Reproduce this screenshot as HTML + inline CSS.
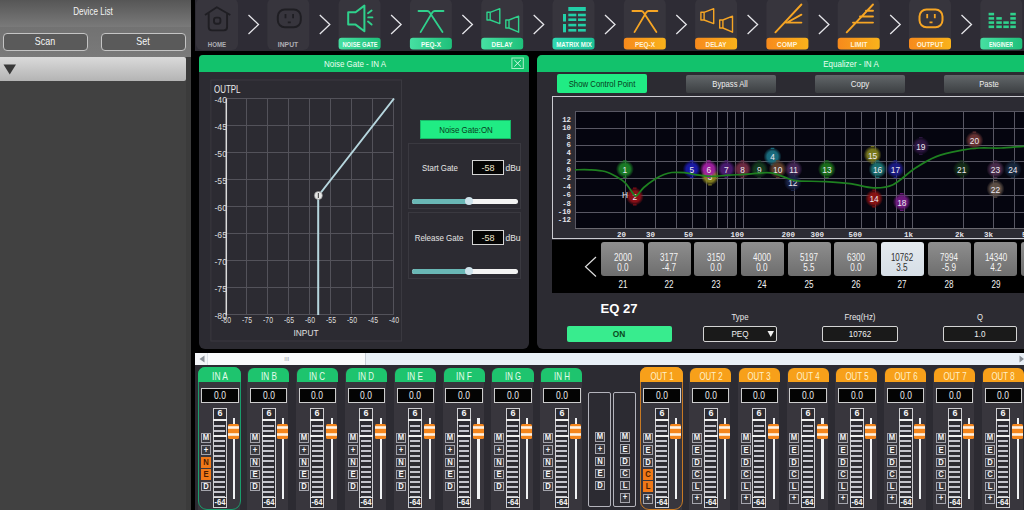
<!DOCTYPE html><html><head><meta charset="utf-8"><style>
*{margin:0;padding:0;box-sizing:border-box}
html,body{width:1024px;height:510px;overflow:hidden;background:#000}
body{position:relative;font-family:"Liberation Sans",sans-serif}
.a{position:absolute}
.t{white-space:nowrap}
svg{position:absolute;overflow:visible}
</style></head><body>

<div class="a" style="left:0.00px;top:0.00px;width:191.00px;height:27.00px;background:linear-gradient(#565656,#7a7a7a)"></div>
<div class="a" style="left:0.00px;top:27.00px;width:191.00px;height:30.00px;background:linear-gradient(#727272,#7a7a7a)"></div>
<div class="a t" style="left:-107.50px;top:4.79px;width:400px;height:14.42px;line-height:14.42px;font-size:10.3px;color:#f4f4f4;text-align:center;transform:scaleX(0.784);transform-origin:50% 50%;">Device List</div>
<div class="a" style="left:3.00px;top:32.80px;width:84.50px;height:18.00px;background:#5a5a5a;border:1.8px solid #c4c4c4;border-radius:4px"></div>
<div class="a t" style="left:-155.00px;top:34.45px;width:400px;height:14.70px;line-height:14.70px;font-size:10.5px;color:#f6f6f6;text-align:center;transform:scaleX(0.850);transform-origin:50% 50%;">Scan</div>
<div class="a" style="left:101.00px;top:32.80px;width:84.50px;height:18.00px;background:#5a5a5a;border:1.8px solid #c4c4c4;border-radius:4px"></div>
<div class="a t" style="left:-57.00px;top:34.45px;width:400px;height:14.70px;line-height:14.70px;font-size:10.5px;color:#f6f6f6;text-align:center;transform:scaleX(0.850);transform-origin:50% 50%;">Set</div>
<div class="a" style="left:0.00px;top:57.00px;width:191.00px;height:453.00px;background:#414141"></div>
<div class="a" style="left:0.00px;top:57.00px;width:186.00px;height:23.50px;background:linear-gradient(#dadada,#b4b4b4);border-radius:0 2px 2px 0"></div>
<svg style="left:0;top:0" width="191" height="100"><polygon points="3.5,64.5 16,64.5 9.75,74.5" fill="#383838"/></svg>
<div class="a" style="left:186.00px;top:57.00px;width:5.00px;height:453.00px;background:#3b3b3b"></div>
<div class="a" style="left:195.00px;top:0.00px;width:829.00px;height:50.60px;background:#2e2c35"></div>
<svg style="left:0;top:0" width="1024" height="52">
<rect x="196.00" y="-1.5" width="42" height="51.5" rx="6" fill="#37353d"/>
<polyline points="248.50,15 258.50,24.5 248.50,34" fill="none" stroke="#e6e6ea" stroke-width="1.3"/>
<path d="M205.0,15 L216.8,7.2 L230.3,15 M208.7,12.8 V27 Q208.7,30.4 212.0,30.4 H223.8 Q227.1,30.4 227.1,27 V12.8" fill="none" stroke="#1f1e23" stroke-width="1.9" stroke-linejoin="round"/>
<rect x="214.0" y="17.6" width="6.4" height="6.1" rx="2.2" fill="none" stroke="#1f1e23" stroke-width="1.9"/>
<rect x="267.30" y="-1.5" width="42" height="51.5" rx="6" fill="#37353d"/>
<polyline points="319.80,15 329.80,24.5 319.80,34" fill="none" stroke="#e6e6ea" stroke-width="1.3"/>
<rect x="277.8" y="9.5" width="23" height="17.8" rx="7" fill="none" stroke="#1f1e23" stroke-width="2"/>
<path d="M285.5,14 V18.2 M293.1,14 V18.2 M287.8,22.3 H290.8" fill="none" stroke="#1f1e23" stroke-width="1.8"/>
<rect x="338.60" y="-1.5" width="42" height="51.5" rx="6" fill="#37353d"/>
<polyline points="391.10,15 401.10,24.5 391.10,34" fill="none" stroke="#e6e6ea" stroke-width="1.3"/>
<path d="M348.20000000000005,12.3 H355.6 L364.40000000000003,5.6 V31.2 L355.6,24.6 H348.20000000000005 Z" fill="none" stroke="#2fd18c" stroke-width="2" stroke-linejoin="round"/>
<path d="M368.0,13.3 L371.6,10.6 M368.20000000000005,17.4 H372.40000000000003 M368.0,21.6 L371.6,24.6" fill="none" stroke="#2fd18c" stroke-width="1.9" stroke-linecap="round"/>
<defs><linearGradient id="g2" x1="0" x2="1" y1="0" y2="0"><stop offset="0" stop-color="#46e0a2"/><stop offset="1" stop-color="#1fc07a"/></linearGradient></defs>
<rect x="338.60" y="37.7" width="42" height="11.7" rx="3" fill="url(#g2)"/>
<rect x="409.90" y="-1.5" width="42" height="51.5" rx="6" fill="#37353d"/>
<polyline points="462.40,15 472.40,24.5 462.40,34" fill="none" stroke="#e6e6ea" stroke-width="1.3"/>
<path d="M418.5,11 H427.29999999999995 Q428.7,11 429.7,12.6 L442.5,32.1 M443.5,11 H434.7 Q433.29999999999995,11 432.29999999999995,12.6 L420.59999999999997,32.1" fill="none" stroke="#2fd18c" stroke-width="1.8" stroke-linecap="round"/>
<defs><linearGradient id="g3" x1="0" x2="1" y1="0" y2="0"><stop offset="0" stop-color="#46e0a2"/><stop offset="1" stop-color="#1fc07a"/></linearGradient></defs>
<rect x="409.90" y="37.7" width="42" height="11.7" rx="3" fill="url(#g3)"/>
<rect x="481.20" y="-1.5" width="42" height="51.5" rx="6" fill="#37353d"/>
<polyline points="533.70,15 543.70,24.5 533.70,34" fill="none" stroke="#e6e6ea" stroke-width="1.3"/>
<path d="M487.0,12.3 H490.2 V20 H487.0 Z M490.2,12.3 L499.8,8.7 V23.6 L490.2,20" fill="none" stroke="#2fd18c" stroke-width="1.4" stroke-linejoin="round"/>
<path d="M505.8,20 H509.0 V28 H505.8 Z M509.0,20 L518.6,16.2 V32.2 L509.0,28" fill="none" stroke="#2fd18c" stroke-width="1.4" stroke-linejoin="round"/>
<defs><linearGradient id="g4" x1="0" x2="1" y1="0" y2="0"><stop offset="0" stop-color="#46e0a2"/><stop offset="1" stop-color="#1fc07a"/></linearGradient></defs>
<rect x="481.20" y="37.7" width="42" height="11.7" rx="3" fill="url(#g4)"/>
<rect x="552.50" y="-1.5" width="42" height="51.5" rx="6" fill="#37353d"/>
<polyline points="605.00,15 615.00,24.5 605.00,34" fill="none" stroke="#e6e6ea" stroke-width="1.3"/>
<rect x="568.3" y="7" width="17.5" height="4" fill="#22cfa8"/>
<rect x="563.0" y="14" width="3" height="7.5" fill="#22cfa8"/><rect x="563.0" y="24" width="3" height="8.3" fill="#22cfa8"/>
<rect x="568.3" y="13.7" width="8" height="2.6" fill="#22cfa8"/><rect x="578.0" y="13.7" width="7.8" height="2.6" fill="#22cfa8"/>
<rect x="568.3" y="18.4" width="8" height="2.6" fill="#22cfa8"/><rect x="578.0" y="18.4" width="7.8" height="2.6" fill="#22cfa8"/>
<rect x="568.3" y="23.8" width="8" height="2.6" fill="#22cfa8"/><rect x="578.0" y="23.8" width="7.8" height="2.6" fill="#22cfa8"/>
<rect x="568.3" y="29" width="8" height="2.6" fill="#22cfa8"/><rect x="578.0" y="29" width="7.8" height="2.6" fill="#22cfa8"/>
<defs><linearGradient id="g5" x1="0" x2="1" y1="0" y2="0"><stop offset="0" stop-color="#2fd8b0"/><stop offset="1" stop-color="#1cc096"/></linearGradient></defs>
<rect x="552.50" y="37.7" width="42" height="11.7" rx="3" fill="url(#g5)"/>
<rect x="623.80" y="-1.5" width="42" height="51.5" rx="6" fill="#37353d"/>
<polyline points="676.30,15 686.30,24.5 676.30,34" fill="none" stroke="#e6e6ea" stroke-width="1.3"/>
<path d="M632.4,11 H641.1999999999999 Q642.5999999999999,11 643.5999999999999,12.6 L656.4,32.1 M657.4,11 H648.5999999999999 Q647.1999999999999,11 646.1999999999999,12.6 L634.5,32.1" fill="none" stroke="#f6a524" stroke-width="1.8" stroke-linecap="round"/>
<defs><linearGradient id="g6" x1="0" x2="1" y1="0" y2="0"><stop offset="0" stop-color="#f78a1c"/><stop offset="1" stop-color="#f9b21b"/></linearGradient></defs>
<rect x="623.80" y="37.7" width="42" height="11.7" rx="3" fill="url(#g6)"/>
<rect x="695.10" y="-1.5" width="42" height="51.5" rx="6" fill="#37353d"/>
<polyline points="747.60,15 757.60,24.5 747.60,34" fill="none" stroke="#e6e6ea" stroke-width="1.3"/>
<path d="M700.8999999999999,12.3 H704.0999999999999 V20 H700.8999999999999 Z M704.0999999999999,12.3 L713.6999999999999,8.7 V23.6 L704.0999999999999,20" fill="none" stroke="#f6a524" stroke-width="1.4" stroke-linejoin="round"/>
<path d="M719.6999999999999,20 H722.8999999999999 V28 H719.6999999999999 Z M722.8999999999999,20 L732.4999999999999,16.2 V32.2 L722.8999999999999,28" fill="none" stroke="#f6a524" stroke-width="1.4" stroke-linejoin="round"/>
<defs><linearGradient id="g7" x1="0" x2="1" y1="0" y2="0"><stop offset="0" stop-color="#f78a1c"/><stop offset="1" stop-color="#f9b21b"/></linearGradient></defs>
<rect x="695.10" y="37.7" width="42" height="11.7" rx="3" fill="url(#g7)"/>
<rect x="766.40" y="-1.5" width="42" height="51.5" rx="6" fill="#37353d"/>
<polyline points="818.90,15 828.90,24.5 818.90,34" fill="none" stroke="#e6e6ea" stroke-width="1.3"/>
<path d="M775.4,32.3 L801.4,4.5 M788.0,22 L801.4,14.7 M786.0,22.6 H801.4" fill="none" stroke="#f6a524" stroke-width="1.9" stroke-linecap="round"/>
<defs><linearGradient id="g8" x1="0" x2="1" y1="0" y2="0"><stop offset="0" stop-color="#f78a1c"/><stop offset="1" stop-color="#f9b21b"/></linearGradient></defs>
<rect x="766.40" y="37.7" width="42" height="11.7" rx="3" fill="url(#g8)"/>
<rect x="837.70" y="-1.5" width="42" height="51.5" rx="6" fill="#37353d"/>
<polyline points="890.20,15 900.20,24.5 890.20,34" fill="none" stroke="#e6e6ea" stroke-width="1.3"/>
<path d="M846.6999999999999,32.3 L872.9999999999999,4.5 M865.9999999999999,10.7 H872.9999999999999 M859.9999999999999,16.5 H872.9999999999999 M852.9999999999999,22.6 H872.9999999999999" fill="none" stroke="#f6a524" stroke-width="1.9" stroke-linecap="round"/>
<defs><linearGradient id="g9" x1="0" x2="1" y1="0" y2="0"><stop offset="0" stop-color="#f78a1c"/><stop offset="1" stop-color="#f9b21b"/></linearGradient></defs>
<rect x="837.70" y="37.7" width="42" height="11.7" rx="3" fill="url(#g9)"/>
<rect x="909.00" y="-1.5" width="42" height="51.5" rx="6" fill="#37353d"/>
<polyline points="961.50,15 971.50,24.5 961.50,34" fill="none" stroke="#e6e6ea" stroke-width="1.3"/>
<rect x="919.5" y="9.5" width="23" height="17.8" rx="7" fill="none" stroke="#f6a524" stroke-width="2"/>
<path d="M927.2,14 V18.2 M934.8,14 V18.2 M929.5,22.3 H932.5" fill="none" stroke="#f6a524" stroke-width="1.8"/>
<defs><linearGradient id="g10" x1="0" x2="1" y1="0" y2="0"><stop offset="0" stop-color="#f78a1c"/><stop offset="1" stop-color="#f9b21b"/></linearGradient></defs>
<rect x="909.00" y="37.7" width="42" height="11.7" rx="3" fill="url(#g10)"/>
<rect x="980.30" y="-1.5" width="42" height="51.5" rx="6" fill="#37353d"/>
<rect x="988.6" y="12.8" width="5.5" height="2.6" fill="#2fd18c"/>
<rect x="988.6" y="17.1" width="5.5" height="2.6" fill="#2fd18c"/>
<rect x="988.6" y="21.3" width="5.5" height="2.6" fill="#2fd18c"/>
<rect x="988.6" y="25.5" width="5.5" height="2.6" fill="#2fd18c"/>
<rect x="996.3" y="17.1" width="5.5" height="2.6" fill="#2fd18c"/>
<rect x="996.3" y="21.3" width="5.5" height="2.6" fill="#2fd18c"/>
<rect x="996.3" y="25.5" width="5.5" height="2.6" fill="#2fd18c"/>
<rect x="1003.3" y="21.3" width="5.5" height="2.6" fill="#2fd18c"/>
<rect x="1003.3" y="25.5" width="5.5" height="2.6" fill="#2fd18c"/>
<rect x="1010.3" y="12.8" width="5.5" height="2.6" fill="#2fd18c"/>
<rect x="1010.3" y="17.1" width="5.5" height="2.6" fill="#2fd18c"/>
<rect x="1010.3" y="21.3" width="5.5" height="2.6" fill="#2fd18c"/>
<rect x="1010.3" y="25.5" width="5.5" height="2.6" fill="#2fd18c"/>
<defs><linearGradient id="g11" x1="0" x2="1" y1="0" y2="0"><stop offset="0" stop-color="#46e0a2"/><stop offset="1" stop-color="#1fc07a"/></linearGradient></defs>
<rect x="980.30" y="37.7" width="42" height="11.7" rx="3" fill="url(#g11)"/>
</svg>
<div class="a t" style="left:17.00px;top:39.60px;width:400px;height:9.80px;line-height:9.80px;font-size:7px;color:#aeaeb4;text-align:center;font-weight:bold;transform:scaleX(0.876);transform-origin:50% 50%;">HOME</div>
<div class="a t" style="left:88.30px;top:39.60px;width:400px;height:9.80px;line-height:9.80px;font-size:7px;color:#aeaeb4;text-align:center;font-weight:bold;transform:scaleX(0.967);transform-origin:50% 50%;">INPUT</div>
<div class="a t" style="left:159.60px;top:39.60px;width:400px;height:9.80px;line-height:9.80px;font-size:7px;color:#effff6;text-align:center;font-weight:bold;transform:scaleX(0.825);transform-origin:50% 50%;">NOISE GATE</div>
<div class="a t" style="left:230.90px;top:39.60px;width:400px;height:9.80px;line-height:9.80px;font-size:7px;color:#effff6;text-align:center;font-weight:bold;transform:scaleX(0.914);transform-origin:50% 50%;">PEQ-X</div>
<div class="a t" style="left:302.20px;top:39.60px;width:400px;height:9.80px;line-height:9.80px;font-size:7px;color:#effff6;text-align:center;font-weight:bold;transform:scaleX(0.901);transform-origin:50% 50%;">DELAY</div>
<div class="a t" style="left:373.50px;top:39.60px;width:400px;height:9.80px;line-height:9.80px;font-size:7px;color:#effff6;text-align:center;font-weight:bold;transform:scaleX(0.870);transform-origin:50% 50%;">MATRIX MIX</div>
<div class="a t" style="left:444.80px;top:39.60px;width:400px;height:9.80px;line-height:9.80px;font-size:7px;color:#fff2d8;text-align:center;font-weight:bold;transform:scaleX(0.914);transform-origin:50% 50%;">PEQ-X</div>
<div class="a t" style="left:516.10px;top:39.60px;width:400px;height:9.80px;line-height:9.80px;font-size:7px;color:#fff2d8;text-align:center;font-weight:bold;transform:scaleX(0.901);transform-origin:50% 50%;">DELAY</div>
<div class="a t" style="left:587.40px;top:39.60px;width:400px;height:9.80px;line-height:9.80px;font-size:7px;color:#fff2d8;text-align:center;font-weight:bold;transform:scaleX(0.976);transform-origin:50% 50%;">COMP</div>
<div class="a t" style="left:658.70px;top:39.60px;width:400px;height:9.80px;line-height:9.80px;font-size:7px;color:#fff2d8;text-align:center;font-weight:bold;transform:scaleX(0.930);transform-origin:50% 50%;">LIMIT</div>
<div class="a t" style="left:730.00px;top:39.60px;width:400px;height:9.80px;line-height:9.80px;font-size:7px;color:#fff2d8;text-align:center;font-weight:bold;transform:scaleX(0.928);transform-origin:50% 50%;">OUTPUT</div>
<div class="a t" style="left:801.30px;top:39.60px;width:400px;height:9.80px;line-height:9.80px;font-size:7px;color:#effff6;text-align:center;font-weight:bold;transform:scaleX(0.749);transform-origin:50% 50%;">ENGINER</div>
<div class="a" style="left:198.80px;top:54.80px;width:330.50px;height:294.20px;background:#2c2b32;border-radius:4px 4px 6px 6px;overflow:hidden"></div>
<div class="a" style="left:198.80px;top:54.80px;width:330.50px;height:17.20px;background:#12c26c;border-radius:4px 4px 0 0"></div>
<div class="a t" style="left:155.00px;top:56.74px;width:400px;height:13.72px;line-height:13.72px;font-size:9.8px;color:#eafff2;text-align:center;transform:scaleX(0.813);transform-origin:50% 50%;">Noise Gate - IN A</div>
<svg style="left:0;top:0" width="1024" height="350">
<rect x="511.9" y="58" width="11.4" height="10.5" fill="none" stroke="#a8f0c8" stroke-width="1"/>
<path d="M514.3,60 L520.9,66.5 M520.9,60 L514.3,66.5" stroke="#d8fbe8" stroke-width="1"/>
<rect x="210.9" y="80" width="190.6" height="261" fill="none" stroke="#3a3940" stroke-width="1"/>
<path d="M246.5,99 V315 M267.5,99 V315 M288.5,99 V315 M309.5,99 V315 M330.5,99 V315 M351.5,99 V315 M372.5,99 V315 M393.5,99 V315 M226,98.5 H394 M226,125.5 H394 M226,152.5 H394 M226,179.5 H394 M226,206.5 H394 M226,233.5 H394 M226,260.5 H394 M226,287.5 H394 M226,314.5 H394" stroke="#53525a" stroke-width="1" fill="none"/>
<path d="M226.3,99 V315.5" stroke="#dcdcdc" stroke-width="1.5"/>
<path d="M318.2,315 V196 L394,98.5" stroke="#b6d6de" stroke-width="2" fill="none"/>
<circle cx="318.4" cy="195.5" r="4" fill="#e6e6e6" stroke="#888" stroke-width="0.6"/>
<path d="M318.4,193 V198" stroke="#555" stroke-width="1.2"/>
</svg>
<div class="a t" style="left:213.80px;top:82.45px;width:400px;height:14.70px;line-height:14.70px;font-size:10.5px;color:#ececec;text-align:left;transform:scaleX(0.757);transform-origin:0% 50%;">OUTPL</div>
<div class="a t" style="left:-173.50px;top:92.64px;width:400px;height:13.72px;line-height:13.72px;font-size:9.8px;color:#dedede;text-align:right;transform:scaleX(0.883);transform-origin:100% 50%;">-40</div>
<div class="a t" style="left:-173.50px;top:119.64px;width:400px;height:13.72px;line-height:13.72px;font-size:9.8px;color:#dedede;text-align:right;transform:scaleX(0.883);transform-origin:100% 50%;">-45</div>
<div class="a t" style="left:-173.50px;top:146.64px;width:400px;height:13.72px;line-height:13.72px;font-size:9.8px;color:#dedede;text-align:right;transform:scaleX(0.883);transform-origin:100% 50%;">-50</div>
<div class="a t" style="left:-173.50px;top:173.64px;width:400px;height:13.72px;line-height:13.72px;font-size:9.8px;color:#dedede;text-align:right;transform:scaleX(0.883);transform-origin:100% 50%;">-55</div>
<div class="a t" style="left:-173.50px;top:200.64px;width:400px;height:13.72px;line-height:13.72px;font-size:9.8px;color:#dedede;text-align:right;transform:scaleX(0.883);transform-origin:100% 50%;">-60</div>
<div class="a t" style="left:-173.50px;top:227.64px;width:400px;height:13.72px;line-height:13.72px;font-size:9.8px;color:#dedede;text-align:right;transform:scaleX(0.883);transform-origin:100% 50%;">-65</div>
<div class="a t" style="left:-173.50px;top:254.64px;width:400px;height:13.72px;line-height:13.72px;font-size:9.8px;color:#dedede;text-align:right;transform:scaleX(0.883);transform-origin:100% 50%;">-70</div>
<div class="a t" style="left:-173.50px;top:281.64px;width:400px;height:13.72px;line-height:13.72px;font-size:9.8px;color:#dedede;text-align:right;transform:scaleX(0.883);transform-origin:100% 50%;">-75</div>
<div class="a t" style="left:-173.50px;top:308.64px;width:400px;height:13.72px;line-height:13.72px;font-size:9.8px;color:#dedede;text-align:right;transform:scaleX(0.883);transform-origin:100% 50%;">-80</div>
<div class="a t" style="left:26.00px;top:313.14px;width:400px;height:13.72px;line-height:13.72px;font-size:9.8px;color:#dedede;text-align:center;transform:scaleX(0.706);transform-origin:50% 50%;">-80</div>
<div class="a t" style="left:47.00px;top:313.14px;width:400px;height:13.72px;line-height:13.72px;font-size:9.8px;color:#dedede;text-align:center;transform:scaleX(0.706);transform-origin:50% 50%;">-75</div>
<div class="a t" style="left:68.00px;top:313.14px;width:400px;height:13.72px;line-height:13.72px;font-size:9.8px;color:#dedede;text-align:center;transform:scaleX(0.706);transform-origin:50% 50%;">-70</div>
<div class="a t" style="left:89.00px;top:313.14px;width:400px;height:13.72px;line-height:13.72px;font-size:9.8px;color:#dedede;text-align:center;transform:scaleX(0.706);transform-origin:50% 50%;">-65</div>
<div class="a t" style="left:110.00px;top:313.14px;width:400px;height:13.72px;line-height:13.72px;font-size:9.8px;color:#dedede;text-align:center;transform:scaleX(0.706);transform-origin:50% 50%;">-60</div>
<div class="a t" style="left:131.00px;top:313.14px;width:400px;height:13.72px;line-height:13.72px;font-size:9.8px;color:#dedede;text-align:center;transform:scaleX(0.706);transform-origin:50% 50%;">-55</div>
<div class="a t" style="left:152.00px;top:313.14px;width:400px;height:13.72px;line-height:13.72px;font-size:9.8px;color:#dedede;text-align:center;transform:scaleX(0.706);transform-origin:50% 50%;">-50</div>
<div class="a t" style="left:173.00px;top:313.14px;width:400px;height:13.72px;line-height:13.72px;font-size:9.8px;color:#dedede;text-align:center;transform:scaleX(0.706);transform-origin:50% 50%;">-45</div>
<div class="a t" style="left:194.00px;top:313.14px;width:400px;height:13.72px;line-height:13.72px;font-size:9.8px;color:#dedede;text-align:center;transform:scaleX(0.706);transform-origin:50% 50%;">-40</div>
<div class="a t" style="left:106.00px;top:325.64px;width:400px;height:13.72px;line-height:13.72px;font-size:9.8px;color:#e0e0e0;text-align:center;transform:scaleX(0.850);transform-origin:50% 50%;">INPUT</div>
<div class="a" style="left:420.20px;top:119.80px;width:91.00px;height:19.20px;background:#20ec84;border:1px solid #18b868"></div>
<div class="a t" style="left:265.70px;top:122.54px;width:400px;height:13.72px;line-height:13.72px;font-size:9.8px;color:#07401e;text-align:center;transform:scaleX(0.807);transform-origin:50% 50%;">Noise Gate:ON</div>
<div class="a" style="left:408.20px;top:143.00px;width:113.00px;height:65.50px;border:1px solid #3a3940"></div>
<div class="a t" style="left:239.90px;top:160.74px;width:400px;height:13.72px;line-height:13.72px;font-size:9.8px;color:#e6e6e6;text-align:center;transform:scaleX(0.802);transform-origin:50% 50%;">Start Gate</div>
<div class="a" style="left:472.00px;top:160.10px;width:32.00px;height:15.00px;background:#050505;border:1px solid #d4d4d4"></div>
<div class="a t" style="left:288.00px;top:160.74px;width:400px;height:13.72px;line-height:13.72px;font-size:9.8px;color:#f0e8d0;text-align:center;transform:scaleX(0.918);transform-origin:50% 50%;">-58</div>
<div class="a t" style="left:312.50px;top:160.74px;width:400px;height:13.72px;line-height:13.72px;font-size:9.8px;color:#e6e6e6;text-align:center;transform:scaleX(0.860);transform-origin:50% 50%;">dBu</div>
<div class="a" style="left:411.80px;top:198.70px;width:106.00px;height:5.20px;background:#f4f4f4;border-radius:3px"></div>
<div class="a" style="left:411.80px;top:198.70px;width:58.00px;height:5.20px;background:#69b7b5;border-radius:3px 0 0 3px"></div>
<div class="a" style="left:465.30px;top:197.30px;width:8.00px;height:8.00px;background:#cfe3ec;border-radius:50%"></div>
<div class="a" style="left:408.20px;top:212.00px;width:113.00px;height:66.70px;border:1px solid #3a3940"></div>
<div class="a t" style="left:239.35px;top:230.74px;width:400px;height:13.72px;line-height:13.72px;font-size:9.8px;color:#e6e6e6;text-align:center;transform:scaleX(0.813);transform-origin:50% 50%;">Release Gate</div>
<div class="a" style="left:472.00px;top:230.10px;width:32.00px;height:15.00px;background:#050505;border:1px solid #d4d4d4"></div>
<div class="a t" style="left:288.00px;top:230.74px;width:400px;height:13.72px;line-height:13.72px;font-size:9.8px;color:#f0e8d0;text-align:center;transform:scaleX(0.918);transform-origin:50% 50%;">-58</div>
<div class="a t" style="left:312.50px;top:230.74px;width:400px;height:13.72px;line-height:13.72px;font-size:9.8px;color:#e6e6e6;text-align:center;transform:scaleX(0.860);transform-origin:50% 50%;">dBu</div>
<div class="a" style="left:411.80px;top:268.70px;width:106.00px;height:5.20px;background:#f4f4f4;border-radius:3px"></div>
<div class="a" style="left:411.80px;top:268.70px;width:58.00px;height:5.20px;background:#69b7b5;border-radius:3px 0 0 3px"></div>
<div class="a" style="left:465.30px;top:267.30px;width:8.00px;height:8.00px;background:#cfe3ec;border-radius:50%"></div>
<div class="a" style="left:537.00px;top:54.80px;width:500.00px;height:294.20px;background:#2c2b32;border-radius:5px 0 0 6px"></div>
<div class="a" style="left:537.00px;top:54.80px;width:500.00px;height:17.20px;background:#12c26c;border-radius:5px 0 0 0"></div>
<div class="a t" style="left:650.70px;top:56.74px;width:400px;height:13.72px;line-height:13.72px;font-size:9.8px;color:#eafff2;text-align:center;transform:scaleX(0.814);transform-origin:50% 50%;">Equalizer - IN A</div>
<div class="a" style="left:556.50px;top:74.00px;width:90.00px;height:19.00px;background:#20ec84;border-radius:2px"></div>
<div class="a t" style="left:401.50px;top:76.64px;width:400px;height:13.72px;line-height:13.72px;font-size:9.8px;color:#07401e;text-align:center;transform:scaleX(0.795);transform-origin:50% 50%;">Show Control Point</div>
<div class="a" style="left:686.00px;top:74.50px;width:90.00px;height:18.50px;background:linear-gradient(#62676a,#3c3f42);border-radius:2px"></div>
<div class="a t" style="left:530.30px;top:76.64px;width:400px;height:13.72px;line-height:13.72px;font-size:9.8px;color:#eeeeee;text-align:center;transform:scaleX(0.785);transform-origin:50% 50%;">Bypass All</div>
<div class="a" style="left:814.60px;top:74.50px;width:90.00px;height:18.50px;background:linear-gradient(#62676a,#3c3f42);border-radius:2px"></div>
<div class="a t" style="left:659.70px;top:76.64px;width:400px;height:13.72px;line-height:13.72px;font-size:9.8px;color:#eeeeee;text-align:center;transform:scaleX(0.813);transform-origin:50% 50%;">Copy</div>
<div class="a" style="left:944.00px;top:74.50px;width:90.00px;height:18.50px;background:linear-gradient(#62676a,#3c3f42);border-radius:2px"></div>
<div class="a t" style="left:788.50px;top:76.64px;width:400px;height:13.72px;line-height:13.72px;font-size:9.8px;color:#eeeeee;text-align:center;transform:scaleX(0.782);transform-origin:50% 50%;">Paste</div>
<div class="a" style="left:552.30px;top:96.30px;width:480.00px;height:142.50px;background:#2c2b33;border:1.5px solid #cacad0;border-right:none"></div>
<svg style="left:0;top:0" width="1024" height="350">
<rect x="575" y="111" width="460" height="117.5" fill="#05050f"/>
<path d="M625.5,111 V228.5 M655.5,111 V228.5 M676.5,111 V228.5 M692.5,111 V228.5 M706.5,111 V228.5 M717.5,111 V228.5 M727.5,111 V228.5 M735.5,111 V228.5 M743.5,111 V228.5 M794.5,111 V228.5 M824.5,111 V228.5 M845.5,111 V228.5 M861.5,111 V228.5 M875.5,111 V228.5 M886.5,111 V228.5 M896.5,111 V228.5 M904.5,111 V228.5 M912.5,111 V228.5 M963.5,111 V228.5 M993.5,111 V228.5 M1014.5,111 V228.5 M575,111.5 H1024 M575,128.5 H1024 M575,145.5 H1024 M575,161.5 H1024 M575,178.5 H1024 M575,195.5 H1024 M575,212.5 H1024 M575.5,111 V228.5" stroke="#585763" stroke-width="1" fill="none"/>
<path d="M575,228.5 H1024" stroke="#6a6970" stroke-width="1" fill="none"/>
<defs>
<radialGradient id="cp1"><stop offset="0" stop-color="#1a7e26"/><stop offset="0.6" stop-color="#1a7e26" stop-opacity="0.95"/><stop offset="1" stop-color="#1a7e26" stop-opacity="0"/></radialGradient>
<radialGradient id="cp2"><stop offset="0" stop-color="#8e1018"/><stop offset="0.6" stop-color="#8e1018" stop-opacity="0.95"/><stop offset="1" stop-color="#8e1018" stop-opacity="0"/></radialGradient>
<radialGradient id="cp3"><stop offset="0" stop-color="#8a8420"/><stop offset="0.6" stop-color="#8a8420" stop-opacity="0.95"/><stop offset="1" stop-color="#8a8420" stop-opacity="0"/></radialGradient>
<radialGradient id="cp4"><stop offset="0" stop-color="#1a6e80"/><stop offset="0.6" stop-color="#1a6e80" stop-opacity="0.95"/><stop offset="1" stop-color="#1a6e80" stop-opacity="0"/></radialGradient>
<radialGradient id="cp5"><stop offset="0" stop-color="#1a1aa8"/><stop offset="0.6" stop-color="#1a1aa8" stop-opacity="0.95"/><stop offset="1" stop-color="#1a1aa8" stop-opacity="0"/></radialGradient>
<radialGradient id="cp6"><stop offset="0" stop-color="#a020a0"/><stop offset="0.6" stop-color="#a020a0" stop-opacity="0.95"/><stop offset="1" stop-color="#a020a0" stop-opacity="0"/></radialGradient>
<radialGradient id="cp7"><stop offset="0" stop-color="#4a1a70"/><stop offset="0.6" stop-color="#4a1a70" stop-opacity="0.95"/><stop offset="1" stop-color="#4a1a70" stop-opacity="0"/></radialGradient>
<radialGradient id="cp8"><stop offset="0" stop-color="#6e2a42"/><stop offset="0.6" stop-color="#6e2a42" stop-opacity="0.95"/><stop offset="1" stop-color="#6e2a42" stop-opacity="0"/></radialGradient>
<radialGradient id="cp9"><stop offset="0" stop-color="#143a1e"/><stop offset="0.6" stop-color="#143a1e" stop-opacity="0.95"/><stop offset="1" stop-color="#143a1e" stop-opacity="0"/></radialGradient>
<radialGradient id="cp10"><stop offset="0" stop-color="#5e3e2a"/><stop offset="0.6" stop-color="#5e3e2a" stop-opacity="0.95"/><stop offset="1" stop-color="#5e3e2a" stop-opacity="0"/></radialGradient>
<radialGradient id="cp11"><stop offset="0" stop-color="#442656"/><stop offset="0.6" stop-color="#442656" stop-opacity="0.95"/><stop offset="1" stop-color="#442656" stop-opacity="0"/></radialGradient>
<radialGradient id="cp12"><stop offset="0" stop-color="#1a2448"/><stop offset="0.6" stop-color="#1a2448" stop-opacity="0.95"/><stop offset="1" stop-color="#1a2448" stop-opacity="0"/></radialGradient>
<radialGradient id="cp13"><stop offset="0" stop-color="#1a701a"/><stop offset="0.6" stop-color="#1a701a" stop-opacity="0.95"/><stop offset="1" stop-color="#1a701a" stop-opacity="0"/></radialGradient>
<radialGradient id="cp14"><stop offset="0" stop-color="#8a1212"/><stop offset="0.6" stop-color="#8a1212" stop-opacity="0.95"/><stop offset="1" stop-color="#8a1212" stop-opacity="0"/></radialGradient>
<radialGradient id="cp15"><stop offset="0" stop-color="#7a7a1c"/><stop offset="0.6" stop-color="#7a7a1c" stop-opacity="0.95"/><stop offset="1" stop-color="#7a7a1c" stop-opacity="0"/></radialGradient>
<radialGradient id="cp16"><stop offset="0" stop-color="#1a7070"/><stop offset="0.6" stop-color="#1a7070" stop-opacity="0.95"/><stop offset="1" stop-color="#1a7070" stop-opacity="0"/></radialGradient>
<radialGradient id="cp17"><stop offset="0" stop-color="#1a1a84"/><stop offset="0.6" stop-color="#1a1a84" stop-opacity="0.95"/><stop offset="1" stop-color="#1a1a84" stop-opacity="0"/></radialGradient>
<radialGradient id="cp18"><stop offset="0" stop-color="#701a80"/><stop offset="0.6" stop-color="#701a80" stop-opacity="0.95"/><stop offset="1" stop-color="#701a80" stop-opacity="0"/></radialGradient>
<radialGradient id="cp19"><stop offset="0" stop-color="#2e1642"/><stop offset="0.6" stop-color="#2e1642" stop-opacity="0.95"/><stop offset="1" stop-color="#2e1642" stop-opacity="0"/></radialGradient>
<radialGradient id="cp20"><stop offset="0" stop-color="#6a3434"/><stop offset="0.6" stop-color="#6a3434" stop-opacity="0.95"/><stop offset="1" stop-color="#6a3434" stop-opacity="0"/></radialGradient>
<radialGradient id="cp21"><stop offset="0" stop-color="#142e18"/><stop offset="0.6" stop-color="#142e18" stop-opacity="0.95"/><stop offset="1" stop-color="#142e18" stop-opacity="0"/></radialGradient>
<radialGradient id="cp22"><stop offset="0" stop-color="#5e5046"/><stop offset="0.6" stop-color="#5e5046" stop-opacity="0.95"/><stop offset="1" stop-color="#5e5046" stop-opacity="0"/></radialGradient>
<radialGradient id="cp23"><stop offset="0" stop-color="#4a2c4c"/><stop offset="0.6" stop-color="#4a2c4c" stop-opacity="0.95"/><stop offset="1" stop-color="#4a2c4c" stop-opacity="0"/></radialGradient>
<radialGradient id="cp24"><stop offset="0" stop-color="#16283e"/><stop offset="0.6" stop-color="#16283e" stop-opacity="0.95"/><stop offset="1" stop-color="#16283e" stop-opacity="0"/></radialGradient>
</defs>
<circle cx="710" cy="176.5" r="9" fill="url(#cp3)"/>
<path d="M708.2,168.2 H711.8 M708.2,184.8 H711.8" stroke="#8a8420" stroke-width="1.2" opacity="0.9"/>
<text x="710" y="180.26" font-size="9.5" font-family="Liberation Sans" fill="#ece8f0" text-anchor="middle" textLength="4.65" lengthAdjust="spacingAndGlyphs">3</text>
<circle cx="624.9" cy="169.1" r="9" fill="url(#cp1)"/>
<path d="M623.1,160.79999999999998 H626.6999999999999 M623.1,177.4 H626.6999999999999" stroke="#1a7e26" stroke-width="1.2" opacity="0.9"/>
<text x="624.9" y="172.86" font-size="9.5" font-family="Liberation Sans" fill="#ece8f0" text-anchor="middle" textLength="4.65" lengthAdjust="spacingAndGlyphs">1</text>
<circle cx="634.8" cy="196.5" r="9" fill="url(#cp2)"/>
<path d="M633.0,188.2 H636.5999999999999 M633.0,204.8 H636.5999999999999" stroke="#8e1018" stroke-width="1.2" opacity="0.9"/>
<text x="634.8" y="200.26" font-size="9.5" font-family="Liberation Sans" fill="#ece8f0" text-anchor="middle" textLength="4.65" lengthAdjust="spacingAndGlyphs">2</text>
<circle cx="691.7" cy="169.2" r="9" fill="url(#cp5)"/>
<path d="M689.9000000000001,160.89999999999998 H693.5 M689.9000000000001,177.5 H693.5" stroke="#1a1aa8" stroke-width="1.2" opacity="0.9"/>
<text x="691.7" y="172.96" font-size="9.5" font-family="Liberation Sans" fill="#ece8f0" text-anchor="middle" textLength="4.65" lengthAdjust="spacingAndGlyphs">5</text>
<circle cx="708.8" cy="169.2" r="9" fill="url(#cp6)"/>
<path d="M707.0,160.89999999999998 H710.5999999999999 M707.0,177.5 H710.5999999999999" stroke="#a020a0" stroke-width="1.2" opacity="0.9"/>
<text x="708.8" y="172.96" font-size="9.5" font-family="Liberation Sans" fill="#ece8f0" text-anchor="middle" textLength="4.65" lengthAdjust="spacingAndGlyphs">6</text>
<circle cx="726.4" cy="169.2" r="9" fill="url(#cp7)"/>
<path d="M724.6,160.89999999999998 H728.1999999999999 M724.6,177.5 H728.1999999999999" stroke="#4a1a70" stroke-width="1.2" opacity="0.9"/>
<text x="726.4" y="172.96" font-size="9.5" font-family="Liberation Sans" fill="#ece8f0" text-anchor="middle" textLength="4.65" lengthAdjust="spacingAndGlyphs">7</text>
<circle cx="742.5" cy="169.2" r="9" fill="url(#cp8)"/>
<path d="M740.7,160.89999999999998 H744.3 M740.7,177.5 H744.3" stroke="#6e2a42" stroke-width="1.2" opacity="0.9"/>
<text x="742.5" y="172.96" font-size="9.5" font-family="Liberation Sans" fill="#ece8f0" text-anchor="middle" textLength="4.65" lengthAdjust="spacingAndGlyphs">8</text>
<circle cx="759.2" cy="169.2" r="9" fill="url(#cp9)"/>
<path d="M757.4000000000001,160.89999999999998 H761.0 M757.4000000000001,177.5 H761.0" stroke="#143a1e" stroke-width="1.2" opacity="0.9"/>
<text x="759.2" y="172.96" font-size="9.5" font-family="Liberation Sans" fill="#ece8f0" text-anchor="middle" textLength="4.65" lengthAdjust="spacingAndGlyphs">9</text>
<circle cx="772.5" cy="156.6" r="9" fill="url(#cp4)"/>
<path d="M770.7,148.29999999999998 H774.3 M770.7,164.9 H774.3" stroke="#1a6e80" stroke-width="1.2" opacity="0.9"/>
<text x="772.5" y="160.36" font-size="9.5" font-family="Liberation Sans" fill="#ece8f0" text-anchor="middle" textLength="4.65" lengthAdjust="spacingAndGlyphs">4</text>
<circle cx="777.7" cy="169.2" r="9" fill="url(#cp10)"/>
<path d="M775.9000000000001,160.89999999999998 H779.5 M775.9000000000001,177.5 H779.5" stroke="#5e3e2a" stroke-width="1.2" opacity="0.9"/>
<text x="777.7" y="172.96" font-size="9.5" font-family="Liberation Sans" fill="#ece8f0" text-anchor="middle" textLength="9.30" lengthAdjust="spacingAndGlyphs">10</text>
<circle cx="793.5" cy="169.2" r="9" fill="url(#cp11)"/>
<path d="M791.7,160.89999999999998 H795.3 M791.7,177.5 H795.3" stroke="#442656" stroke-width="1.2" opacity="0.9"/>
<text x="793.5" y="172.96" font-size="9.5" font-family="Liberation Sans" fill="#ece8f0" text-anchor="middle" textLength="8.68" lengthAdjust="spacingAndGlyphs">11</text>
<circle cx="792.8" cy="182.2" r="9" fill="url(#cp12)"/>
<path d="M791.0,173.89999999999998 H794.5999999999999 M791.0,190.5 H794.5999999999999" stroke="#1a2448" stroke-width="1.2" opacity="0.9"/>
<text x="792.8" y="185.96" font-size="9.5" font-family="Liberation Sans" fill="#ece8f0" text-anchor="middle" textLength="9.30" lengthAdjust="spacingAndGlyphs">12</text>
<circle cx="826.9" cy="169.2" r="9" fill="url(#cp13)"/>
<path d="M825.1,160.89999999999998 H828.6999999999999 M825.1,177.5 H828.6999999999999" stroke="#1a701a" stroke-width="1.2" opacity="0.9"/>
<text x="826.9" y="172.96" font-size="9.5" font-family="Liberation Sans" fill="#ece8f0" text-anchor="middle" textLength="9.30" lengthAdjust="spacingAndGlyphs">13</text>
<circle cx="872.6" cy="154.8" r="9" fill="url(#cp15)"/>
<path d="M870.8000000000001,146.5 H874.4 M870.8000000000001,163.10000000000002 H874.4" stroke="#7a7a1c" stroke-width="1.2" opacity="0.9"/>
<text x="872.6" y="158.56" font-size="9.5" font-family="Liberation Sans" fill="#ece8f0" text-anchor="middle" textLength="9.30" lengthAdjust="spacingAndGlyphs">15</text>
<circle cx="877.6" cy="169.2" r="9" fill="url(#cp16)"/>
<path d="M875.8000000000001,160.89999999999998 H879.4 M875.8000000000001,177.5 H879.4" stroke="#1a7070" stroke-width="1.2" opacity="0.9"/>
<text x="877.6" y="172.96" font-size="9.5" font-family="Liberation Sans" fill="#ece8f0" text-anchor="middle" textLength="9.30" lengthAdjust="spacingAndGlyphs">16</text>
<circle cx="895.4" cy="169.2" r="9" fill="url(#cp17)"/>
<path d="M893.6,160.89999999999998 H897.1999999999999 M893.6,177.5 H897.1999999999999" stroke="#1a1a84" stroke-width="1.2" opacity="0.9"/>
<text x="895.4" y="172.96" font-size="9.5" font-family="Liberation Sans" fill="#ece8f0" text-anchor="middle" textLength="9.30" lengthAdjust="spacingAndGlyphs">17</text>
<circle cx="874.1" cy="198.5" r="9" fill="url(#cp14)"/>
<path d="M872.3000000000001,190.2 H875.9 M872.3000000000001,206.8 H875.9" stroke="#8a1212" stroke-width="1.2" opacity="0.9"/>
<text x="874.1" y="202.26" font-size="9.5" font-family="Liberation Sans" fill="#ece8f0" text-anchor="middle" textLength="9.30" lengthAdjust="spacingAndGlyphs">14</text>
<circle cx="901.8" cy="202" r="9" fill="url(#cp18)"/>
<path d="M900.0,193.7 H903.5999999999999 M900.0,210.3 H903.5999999999999" stroke="#701a80" stroke-width="1.2" opacity="0.9"/>
<text x="901.8" y="205.76" font-size="9.5" font-family="Liberation Sans" fill="#ece8f0" text-anchor="middle" textLength="9.30" lengthAdjust="spacingAndGlyphs">18</text>
<circle cx="920.8" cy="146" r="9" fill="url(#cp19)"/>
<path d="M919.0,137.7 H922.5999999999999 M919.0,154.3 H922.5999999999999" stroke="#2e1642" stroke-width="1.2" opacity="0.9"/>
<text x="920.8" y="149.76" font-size="9.5" font-family="Liberation Sans" fill="#ece8f0" text-anchor="middle" textLength="9.30" lengthAdjust="spacingAndGlyphs">19</text>
<circle cx="974.4" cy="140.4" r="9" fill="url(#cp20)"/>
<path d="M972.6,132.1 H976.1999999999999 M972.6,148.70000000000002 H976.1999999999999" stroke="#6a3434" stroke-width="1.2" opacity="0.9"/>
<text x="974.4" y="144.16" font-size="9.5" font-family="Liberation Sans" fill="#ece8f0" text-anchor="middle" textLength="9.30" lengthAdjust="spacingAndGlyphs">20</text>
<circle cx="961.7" cy="169.2" r="9" fill="url(#cp21)"/>
<path d="M959.9000000000001,160.89999999999998 H963.5 M959.9000000000001,177.5 H963.5" stroke="#142e18" stroke-width="1.2" opacity="0.9"/>
<text x="961.7" y="172.96" font-size="9.5" font-family="Liberation Sans" fill="#ece8f0" text-anchor="middle" textLength="9.30" lengthAdjust="spacingAndGlyphs">21</text>
<circle cx="995.5" cy="188.8" r="9" fill="url(#cp22)"/>
<path d="M993.7,180.5 H997.3 M993.7,197.10000000000002 H997.3" stroke="#5e5046" stroke-width="1.2" opacity="0.9"/>
<text x="995.5" y="192.56" font-size="9.5" font-family="Liberation Sans" fill="#ece8f0" text-anchor="middle" textLength="9.30" lengthAdjust="spacingAndGlyphs">22</text>
<circle cx="995.5" cy="169.2" r="9" fill="url(#cp23)"/>
<path d="M993.7,160.89999999999998 H997.3 M993.7,177.5 H997.3" stroke="#4a2c4c" stroke-width="1.2" opacity="0.9"/>
<text x="995.5" y="172.96" font-size="9.5" font-family="Liberation Sans" fill="#ece8f0" text-anchor="middle" textLength="9.30" lengthAdjust="spacingAndGlyphs">23</text>
<circle cx="1012.8" cy="169.2" r="9" fill="url(#cp24)"/>
<path d="M1011.0,160.89999999999998 H1014.5999999999999 M1011.0,177.5 H1014.5999999999999" stroke="#16283e" stroke-width="1.2" opacity="0.9"/>
<text x="1012.8" y="172.96" font-size="9.5" font-family="Liberation Sans" fill="#ece8f0" text-anchor="middle" textLength="9.30" lengthAdjust="spacingAndGlyphs">24</text>
<path d="M575,169.8 C577.50,169.80 585.00,169.52 590.00,169.80 C595.00,170.08 600.50,170.30 605.00,171.50 C609.50,172.70 613.67,175.15 617.00,177.00 C620.33,178.85 622.58,180.23 625.00,182.60 C627.42,184.97 629.67,188.97 631.50,191.20 C633.33,193.43 633.95,196.62 636.00,196.00 C638.05,195.38 640.67,190.30 643.80,187.50 C646.93,184.70 651.43,181.37 654.80,179.20 C658.17,177.03 661.18,175.62 664.00,174.50 C666.82,173.38 668.30,172.80 671.70,172.50 C675.10,172.20 679.85,172.25 684.40,172.70 C688.95,173.15 694.43,174.58 699.00,175.20 C703.57,175.82 706.90,176.40 711.80,176.40 C716.70,176.40 722.37,175.57 728.40,175.20 C734.43,174.83 742.27,174.60 748.00,174.20 C753.73,173.80 758.50,172.95 762.80,172.80 C767.10,172.65 769.60,172.35 773.80,173.30 C778.00,174.25 784.08,177.25 788.00,178.50 C791.92,179.75 791.03,180.28 797.30,180.80 C803.57,181.32 816.82,181.13 825.60,181.60 C834.38,182.07 841.98,182.55 850.00,183.60 C858.02,184.65 866.53,187.72 873.70,187.90 C880.87,188.08 886.17,187.93 893.00,184.70 C899.83,181.47 907.50,173.18 914.70,168.50 C921.90,163.82 928.32,159.65 936.20,156.60 C944.08,153.55 954.82,151.63 962.00,150.20 C969.18,148.77 972.82,148.37 979.30,148.00 C985.78,147.63 993.45,148.28 1000.90,148.00 C1008.35,147.72 1017.48,146.72 1024.00,146.30 C1030.52,145.88 1037.33,145.63 1040.00,145.50" stroke="#1e8020" stroke-width="1.7" fill="none"/>
</svg>
<div class="a t" style="left:424.60px;top:187.74px;width:400px;height:13.72px;line-height:13.72px;font-size:9.8px;color:#e8e8f0;text-align:center;transform:scaleX(0.848);transform-origin:50% 50%;">H</div>
<div class="a t" style="left:171.30px;top:113.82px;width:400px;height:11.20px;line-height:11.20px;font-size:8px;color:#e4e4ea;text-align:right;font-weight:bold;transform:scaleX(0.917);transform-origin:100% 50%;font-family:'Liberation Mono',monospace">12</div>
<div class="a t" style="left:171.30px;top:122.20px;width:400px;height:11.20px;line-height:11.20px;font-size:8px;color:#e4e4ea;text-align:right;font-weight:bold;transform:scaleX(0.917);transform-origin:100% 50%;font-family:'Liberation Mono',monospace">10</div>
<div class="a t" style="left:171.30px;top:130.58px;width:400px;height:11.20px;line-height:11.20px;font-size:8px;color:#e4e4ea;text-align:right;font-weight:bold;transform:scaleX(0.917);transform-origin:100% 50%;font-family:'Liberation Mono',monospace">8</div>
<div class="a t" style="left:171.30px;top:138.96px;width:400px;height:11.20px;line-height:11.20px;font-size:8px;color:#e4e4ea;text-align:right;font-weight:bold;transform:scaleX(0.917);transform-origin:100% 50%;font-family:'Liberation Mono',monospace">6</div>
<div class="a t" style="left:171.30px;top:147.34px;width:400px;height:11.20px;line-height:11.20px;font-size:8px;color:#e4e4ea;text-align:right;font-weight:bold;transform:scaleX(0.917);transform-origin:100% 50%;font-family:'Liberation Mono',monospace">4</div>
<div class="a t" style="left:171.30px;top:155.72px;width:400px;height:11.20px;line-height:11.20px;font-size:8px;color:#e4e4ea;text-align:right;font-weight:bold;transform:scaleX(0.917);transform-origin:100% 50%;font-family:'Liberation Mono',monospace">2</div>
<div class="a t" style="left:171.30px;top:164.10px;width:400px;height:11.20px;line-height:11.20px;font-size:8px;color:#e4e4ea;text-align:right;font-weight:bold;transform:scaleX(0.917);transform-origin:100% 50%;font-family:'Liberation Mono',monospace">0</div>
<div class="a t" style="left:171.30px;top:172.48px;width:400px;height:11.20px;line-height:11.20px;font-size:8px;color:#e4e4ea;text-align:right;font-weight:bold;transform:scaleX(0.917);transform-origin:100% 50%;font-family:'Liberation Mono',monospace">-2</div>
<div class="a t" style="left:171.30px;top:180.86px;width:400px;height:11.20px;line-height:11.20px;font-size:8px;color:#e4e4ea;text-align:right;font-weight:bold;transform:scaleX(0.917);transform-origin:100% 50%;font-family:'Liberation Mono',monospace">-4</div>
<div class="a t" style="left:171.30px;top:189.24px;width:400px;height:11.20px;line-height:11.20px;font-size:8px;color:#e4e4ea;text-align:right;font-weight:bold;transform:scaleX(0.917);transform-origin:100% 50%;font-family:'Liberation Mono',monospace">-6</div>
<div class="a t" style="left:171.30px;top:197.62px;width:400px;height:11.20px;line-height:11.20px;font-size:8px;color:#e4e4ea;text-align:right;font-weight:bold;transform:scaleX(0.917);transform-origin:100% 50%;font-family:'Liberation Mono',monospace">-8</div>
<div class="a t" style="left:171.30px;top:206.00px;width:400px;height:11.20px;line-height:11.20px;font-size:8px;color:#e4e4ea;text-align:right;font-weight:bold;transform:scaleX(0.917);transform-origin:100% 50%;font-family:'Liberation Mono',monospace">-10</div>
<div class="a t" style="left:171.30px;top:214.38px;width:400px;height:11.20px;line-height:11.20px;font-size:8px;color:#e4e4ea;text-align:right;font-weight:bold;transform:scaleX(0.917);transform-origin:100% 50%;font-family:'Liberation Mono',monospace">-12</div>
<div class="a t" style="left:225.50px;top:229.20px;width:400px;height:11.20px;line-height:11.20px;font-size:8px;color:#e4e4ea;text-align:right;font-weight:bold;transform:scaleX(0.938);transform-origin:100% 50%;font-family:'Liberation Mono',monospace">20</div>
<div class="a t" style="left:255.26px;top:229.20px;width:400px;height:11.20px;line-height:11.20px;font-size:8px;color:#e4e4ea;text-align:right;font-weight:bold;transform:scaleX(0.938);transform-origin:100% 50%;font-family:'Liberation Mono',monospace">30</div>
<div class="a t" style="left:292.75px;top:229.20px;width:400px;height:11.20px;line-height:11.20px;font-size:8px;color:#e4e4ea;text-align:right;font-weight:bold;transform:scaleX(0.938);transform-origin:100% 50%;font-family:'Liberation Mono',monospace">50</div>
<div class="a t" style="left:343.63px;top:229.20px;width:400px;height:11.20px;line-height:11.20px;font-size:8px;color:#e4e4ea;text-align:right;font-weight:bold;transform:scaleX(0.938);transform-origin:100% 50%;font-family:'Liberation Mono',monospace">100</div>
<div class="a t" style="left:394.50px;top:229.20px;width:400px;height:11.20px;line-height:11.20px;font-size:8px;color:#e4e4ea;text-align:right;font-weight:bold;transform:scaleX(0.938);transform-origin:100% 50%;font-family:'Liberation Mono',monospace">200</div>
<div class="a t" style="left:424.26px;top:229.20px;width:400px;height:11.20px;line-height:11.20px;font-size:8px;color:#e4e4ea;text-align:right;font-weight:bold;transform:scaleX(0.938);transform-origin:100% 50%;font-family:'Liberation Mono',monospace">300</div>
<div class="a t" style="left:461.75px;top:229.20px;width:400px;height:11.20px;line-height:11.20px;font-size:8px;color:#e4e4ea;text-align:right;font-weight:bold;transform:scaleX(0.938);transform-origin:100% 50%;font-family:'Liberation Mono',monospace">500</div>
<div class="a t" style="left:512.63px;top:229.20px;width:400px;height:11.20px;line-height:11.20px;font-size:8px;color:#e4e4ea;text-align:right;font-weight:bold;transform:scaleX(0.938);transform-origin:100% 50%;font-family:'Liberation Mono',monospace">1k</div>
<div class="a t" style="left:563.50px;top:229.20px;width:400px;height:11.20px;line-height:11.20px;font-size:8px;color:#e4e4ea;text-align:right;font-weight:bold;transform:scaleX(0.938);transform-origin:100% 50%;font-family:'Liberation Mono',monospace">2k</div>
<div class="a t" style="left:593.26px;top:229.20px;width:400px;height:11.20px;line-height:11.20px;font-size:8px;color:#e4e4ea;text-align:right;font-weight:bold;transform:scaleX(0.938);transform-origin:100% 50%;font-family:'Liberation Mono',monospace">3k</div>
<div class="a t" style="left:630.75px;top:229.20px;width:400px;height:11.20px;line-height:11.20px;font-size:8px;color:#e4e4ea;text-align:right;font-weight:bold;transform:scaleX(0.938);transform-origin:100% 50%;font-family:'Liberation Mono',monospace">5k</div>
<div class="a" style="left:552.00px;top:240.00px;width:480.00px;height:52.50px;background:#000"></div>
<svg style="left:0;top:0" width="1024" height="300"><polyline points="596,257 585.5,266.8 596,276.5" fill="none" stroke="#dcdcdc" stroke-width="1.2"/></svg>
<div class="a" style="left:601.00px;top:242.00px;width:43.00px;height:33.50px;background:linear-gradient(#8e8e8e,#6e6e6e);border-radius:3px"></div>
<div class="a t" style="left:422.50px;top:250.66px;width:400px;height:14.28px;line-height:14.28px;font-size:10.2px;color:#f4f4f4;text-align:center;transform:scaleX(0.785);transform-origin:50% 50%;">2000</div>
<div class="a t" style="left:422.50px;top:260.66px;width:400px;height:14.28px;line-height:14.28px;font-size:10.2px;color:#f4f4f4;text-align:center;transform:scaleX(0.800);transform-origin:50% 50%;">0.0</div>
<div class="a t" style="left:422.50px;top:277.66px;width:400px;height:14.28px;line-height:14.28px;font-size:10.2px;color:#f2f2f2;text-align:center;transform:scaleX(0.793);transform-origin:50% 50%;">21</div>
<div class="a" style="left:647.65px;top:242.00px;width:43.00px;height:33.50px;background:linear-gradient(#8e8e8e,#6e6e6e);border-radius:3px"></div>
<div class="a t" style="left:469.15px;top:250.66px;width:400px;height:14.28px;line-height:14.28px;font-size:10.2px;color:#f4f4f4;text-align:center;transform:scaleX(0.785);transform-origin:50% 50%;">3177</div>
<div class="a t" style="left:469.15px;top:260.66px;width:400px;height:14.28px;line-height:14.28px;font-size:10.2px;color:#f4f4f4;text-align:center;transform:scaleX(0.800);transform-origin:50% 50%;">-4.7</div>
<div class="a t" style="left:469.15px;top:277.66px;width:400px;height:14.28px;line-height:14.28px;font-size:10.2px;color:#f2f2f2;text-align:center;transform:scaleX(0.793);transform-origin:50% 50%;">22</div>
<div class="a" style="left:694.30px;top:242.00px;width:43.00px;height:33.50px;background:linear-gradient(#8e8e8e,#6e6e6e);border-radius:3px"></div>
<div class="a t" style="left:515.80px;top:250.66px;width:400px;height:14.28px;line-height:14.28px;font-size:10.2px;color:#f4f4f4;text-align:center;transform:scaleX(0.785);transform-origin:50% 50%;">3150</div>
<div class="a t" style="left:515.80px;top:260.66px;width:400px;height:14.28px;line-height:14.28px;font-size:10.2px;color:#f4f4f4;text-align:center;transform:scaleX(0.800);transform-origin:50% 50%;">0.0</div>
<div class="a t" style="left:515.80px;top:277.66px;width:400px;height:14.28px;line-height:14.28px;font-size:10.2px;color:#f2f2f2;text-align:center;transform:scaleX(0.793);transform-origin:50% 50%;">23</div>
<div class="a" style="left:740.95px;top:242.00px;width:43.00px;height:33.50px;background:linear-gradient(#8e8e8e,#6e6e6e);border-radius:3px"></div>
<div class="a t" style="left:562.45px;top:250.66px;width:400px;height:14.28px;line-height:14.28px;font-size:10.2px;color:#f4f4f4;text-align:center;transform:scaleX(0.785);transform-origin:50% 50%;">4000</div>
<div class="a t" style="left:562.45px;top:260.66px;width:400px;height:14.28px;line-height:14.28px;font-size:10.2px;color:#f4f4f4;text-align:center;transform:scaleX(0.800);transform-origin:50% 50%;">0.0</div>
<div class="a t" style="left:562.45px;top:277.66px;width:400px;height:14.28px;line-height:14.28px;font-size:10.2px;color:#f2f2f2;text-align:center;transform:scaleX(0.793);transform-origin:50% 50%;">24</div>
<div class="a" style="left:787.60px;top:242.00px;width:43.00px;height:33.50px;background:linear-gradient(#8e8e8e,#6e6e6e);border-radius:3px"></div>
<div class="a t" style="left:609.10px;top:250.66px;width:400px;height:14.28px;line-height:14.28px;font-size:10.2px;color:#f4f4f4;text-align:center;transform:scaleX(0.785);transform-origin:50% 50%;">5197</div>
<div class="a t" style="left:609.10px;top:260.66px;width:400px;height:14.28px;line-height:14.28px;font-size:10.2px;color:#f4f4f4;text-align:center;transform:scaleX(0.800);transform-origin:50% 50%;">5.5</div>
<div class="a t" style="left:609.10px;top:277.66px;width:400px;height:14.28px;line-height:14.28px;font-size:10.2px;color:#f2f2f2;text-align:center;transform:scaleX(0.793);transform-origin:50% 50%;">25</div>
<div class="a" style="left:834.25px;top:242.00px;width:43.00px;height:33.50px;background:linear-gradient(#8e8e8e,#6e6e6e);border-radius:3px"></div>
<div class="a t" style="left:655.75px;top:250.66px;width:400px;height:14.28px;line-height:14.28px;font-size:10.2px;color:#f4f4f4;text-align:center;transform:scaleX(0.785);transform-origin:50% 50%;">6300</div>
<div class="a t" style="left:655.75px;top:260.66px;width:400px;height:14.28px;line-height:14.28px;font-size:10.2px;color:#f4f4f4;text-align:center;transform:scaleX(0.800);transform-origin:50% 50%;">0.0</div>
<div class="a t" style="left:655.75px;top:277.66px;width:400px;height:14.28px;line-height:14.28px;font-size:10.2px;color:#f2f2f2;text-align:center;transform:scaleX(0.793);transform-origin:50% 50%;">26</div>
<div class="a" style="left:880.90px;top:242.00px;width:43.00px;height:33.50px;background:linear-gradient(#e4eaef,#d6dee6);border-radius:3px"></div>
<div class="a t" style="left:702.40px;top:250.66px;width:400px;height:14.28px;line-height:14.28px;font-size:10.2px;color:#303030;text-align:center;transform:scaleX(0.785);transform-origin:50% 50%;">10762</div>
<div class="a t" style="left:702.40px;top:260.66px;width:400px;height:14.28px;line-height:14.28px;font-size:10.2px;color:#303030;text-align:center;transform:scaleX(0.800);transform-origin:50% 50%;">3.5</div>
<div class="a t" style="left:702.40px;top:277.66px;width:400px;height:14.28px;line-height:14.28px;font-size:10.2px;color:#f2f2f2;text-align:center;transform:scaleX(0.793);transform-origin:50% 50%;">27</div>
<div class="a" style="left:927.55px;top:242.00px;width:43.00px;height:33.50px;background:linear-gradient(#8e8e8e,#6e6e6e);border-radius:3px"></div>
<div class="a t" style="left:749.05px;top:250.66px;width:400px;height:14.28px;line-height:14.28px;font-size:10.2px;color:#f4f4f4;text-align:center;transform:scaleX(0.785);transform-origin:50% 50%;">7994</div>
<div class="a t" style="left:749.05px;top:260.66px;width:400px;height:14.28px;line-height:14.28px;font-size:10.2px;color:#f4f4f4;text-align:center;transform:scaleX(0.800);transform-origin:50% 50%;">-5.9</div>
<div class="a t" style="left:749.05px;top:277.66px;width:400px;height:14.28px;line-height:14.28px;font-size:10.2px;color:#f2f2f2;text-align:center;transform:scaleX(0.793);transform-origin:50% 50%;">28</div>
<div class="a" style="left:974.20px;top:242.00px;width:43.00px;height:33.50px;background:linear-gradient(#8e8e8e,#6e6e6e);border-radius:3px"></div>
<div class="a t" style="left:795.70px;top:250.66px;width:400px;height:14.28px;line-height:14.28px;font-size:10.2px;color:#f4f4f4;text-align:center;transform:scaleX(0.785);transform-origin:50% 50%;">14340</div>
<div class="a t" style="left:795.70px;top:260.66px;width:400px;height:14.28px;line-height:14.28px;font-size:10.2px;color:#f4f4f4;text-align:center;transform:scaleX(0.800);transform-origin:50% 50%;">4.2</div>
<div class="a t" style="left:795.70px;top:277.66px;width:400px;height:14.28px;line-height:14.28px;font-size:10.2px;color:#f2f2f2;text-align:center;transform:scaleX(0.793);transform-origin:50% 50%;">29</div>
<div class="a" style="left:1020.85px;top:242.00px;width:43.00px;height:33.50px;background:linear-gradient(#8e8e8e,#6e6e6e);border-radius:3px"></div>
<div class="a t" style="left:842.35px;top:277.66px;width:400px;height:14.28px;line-height:14.28px;font-size:10.2px;color:#f2f2f2;text-align:center;transform:scaleX(0.793);transform-origin:50% 50%;">30</div>
<div class="a t" style="left:419.00px;top:301.20px;width:400px;height:16.80px;line-height:16.80px;font-size:12px;color:#ffffff;text-align:center;font-weight:bold;transform:scaleX(1.088);transform-origin:50% 50%;">EQ 27</div>
<div class="a" style="left:566.80px;top:326.00px;width:105.20px;height:15.70px;background:#38ec8e;border-radius:2px"></div>
<div class="a t" style="left:419.40px;top:327.35px;width:400px;height:13.30px;line-height:13.30px;font-size:9.5px;color:#0a4a20;text-align:center;font-weight:bold;transform:scaleX(0.877);transform-origin:50% 50%;">ON</div>
<div class="a t" style="left:539.70px;top:309.84px;width:400px;height:13.72px;line-height:13.72px;font-size:9.8px;color:#e8e8e8;text-align:center;transform:scaleX(0.800);transform-origin:50% 50%;">Type</div>
<div class="a" style="left:702.50px;top:325.70px;width:74.50px;height:16.00px;background:#1a1a1a;border:1.2px solid #d4d4d4;border-radius:2px"></div>
<div class="a t" style="left:539.70px;top:326.94px;width:400px;height:13.72px;line-height:13.72px;font-size:9.8px;color:#f0f0f0;text-align:center;transform:scaleX(0.827);transform-origin:50% 50%;">PEQ</div>
<div class="a t" style="left:659.80px;top:309.84px;width:400px;height:13.72px;line-height:13.72px;font-size:9.8px;color:#e8e8e8;text-align:center;transform:scaleX(0.802);transform-origin:50% 50%;">Freq(Hz)</div>
<div class="a" style="left:822.00px;top:325.70px;width:76.00px;height:16.00px;background:#1a1a1a;border:1.2px solid #d4d4d4;border-radius:2px"></div>
<div class="a t" style="left:659.80px;top:326.94px;width:400px;height:13.72px;line-height:13.72px;font-size:9.8px;color:#f0f0f0;text-align:center;transform:scaleX(0.827);transform-origin:50% 50%;">10762</div>
<div class="a t" style="left:779.70px;top:309.84px;width:400px;height:13.72px;line-height:13.72px;font-size:9.8px;color:#e8e8e8;text-align:center;transform:scaleX(0.787);transform-origin:50% 50%;">Q</div>
<div class="a" style="left:942.50px;top:325.70px;width:74.50px;height:16.00px;background:#1a1a1a;border:1.2px solid #d4d4d4;border-radius:2px"></div>
<div class="a t" style="left:779.70px;top:326.94px;width:400px;height:13.72px;line-height:13.72px;font-size:9.8px;color:#f0f0f0;text-align:center;transform:scaleX(0.827);transform-origin:50% 50%;">1.0</div>
<svg style="left:0;top:0" width="1024" height="350"><polygon points="767.5,331 774,331 770.75,337" fill="#f0f0f0"/></svg>
<div class="a" style="left:195.00px;top:353.00px;width:829.00px;height:12.00px;background:#e9f0f7"></div>
<div class="a" style="left:195.00px;top:353.00px;width:13.00px;height:12.00px;background:#f4f6f8;border-right:1px solid #dde3ea"></div>
<svg style="left:0;top:0" width="1024" height="370"><polygon points="199.5,359 204.5,355.5 204.5,362.5" fill="#8a9098"/><polygon points="1019.5,355.5 1024,359 1019.5,362.5" fill="#8a9098"/></svg>
<div class="a" style="left:208.00px;top:353.00px;width:157.50px;height:12.00px;background:#fafbfc;border-right:1px solid #c8ced6"></div>
<div class="a t" style="left:86.80px;top:355.00px;width:400px;height:8.40px;line-height:8.40px;font-size:6px;color:#9aa0a8;text-align:center;">III</div>
<div class="a" style="left:195.00px;top:365.00px;width:829.00px;height:145.00px;background:#2c2b32"></div>
<div class="a" style="left:198.30px;top:368.00px;width:41.50px;height:142.00px;background:#38363d;border-radius:6px 6px 0 0"></div>
<div class="a" style="left:197.70px;top:366.80px;width:43.40px;height:143.50px;border:1.8px solid #1a9c6c;border-radius:7px 7px 9px 9px"></div>
<div class="a" style="left:197.70px;top:366.80px;width:43.40px;height:15.20px;background:#1ec46e;border-radius:7px 7px 0 0"></div>
<div class="a t" style="left:19.90px;top:369.45px;width:400px;height:14.70px;line-height:14.70px;font-size:10.5px;color:#e2fcec;text-align:center;transform:scaleX(0.801);transform-origin:50% 50%;">IN A</div>
<div class="a" style="left:201.20px;top:388.20px;width:37.40px;height:14.60px;background:#040404;border:1.4px solid #cdcdcd"></div>
<div class="a t" style="left:19.90px;top:388.25px;width:400px;height:14.70px;line-height:14.70px;font-size:10.5px;color:#eeeeee;text-align:center;transform:scaleX(0.808);transform-origin:50% 50%;">0.0</div>
<div class="a" style="left:212.90px;top:408.40px;width:14.00px;height:99.60px;border:1.3px solid #cfcfd2;background:#2c2b31"></div>
<div class="a t" style="left:19.90px;top:408.25px;width:400px;height:11.90px;line-height:11.90px;font-size:8.5px;color:#f4f4f4;text-align:center;font-weight:bold;transform:scaleX(1.058);transform-origin:50% 50%;">6</div>
<div class="a" style="left:212.90px;top:418.90px;width:14.00px;height:1.80px;background:#efefef"></div>
<div class="a" style="left:214.30px;top:425.00px;width:10.80px;height:1.60px;background:#c4c4cc"></div>
<div class="a" style="left:214.30px;top:430.00px;width:10.80px;height:1.60px;background:#c4c4cc"></div>
<div class="a" style="left:212.90px;top:435.00px;width:14.00px;height:2.00px;background:#f0f0f0"></div>
<div class="a" style="left:214.30px;top:440.00px;width:10.80px;height:1.60px;background:#c4c4cc"></div>
<div class="a" style="left:214.30px;top:445.00px;width:10.80px;height:1.60px;background:#c4c4cc"></div>
<div class="a" style="left:214.30px;top:450.00px;width:10.80px;height:1.60px;background:#c4c4cc"></div>
<div class="a" style="left:214.30px;top:455.00px;width:10.80px;height:1.60px;background:#c4c4cc"></div>
<div class="a" style="left:214.30px;top:460.00px;width:10.80px;height:1.60px;background:#c4c4cc"></div>
<div class="a" style="left:214.30px;top:466.00px;width:10.80px;height:1.60px;background:#c4c4cc"></div>
<div class="a" style="left:214.30px;top:471.00px;width:10.80px;height:1.60px;background:#c4c4cc"></div>
<div class="a" style="left:214.30px;top:476.00px;width:10.80px;height:1.60px;background:#c4c4cc"></div>
<div class="a" style="left:214.30px;top:481.00px;width:10.80px;height:1.60px;background:#c4c4cc"></div>
<div class="a" style="left:214.30px;top:486.00px;width:10.80px;height:1.60px;background:#c4c4cc"></div>
<div class="a" style="left:214.30px;top:491.00px;width:10.80px;height:1.60px;background:#c4c4cc"></div>
<div class="a" style="left:214.30px;top:496.00px;width:10.80px;height:1.60px;background:#c4c4cc"></div>
<div class="a" style="left:212.90px;top:496.80px;width:14.00px;height:1.50px;background:#e0e0e0"></div>
<div class="a t" style="left:19.90px;top:496.55px;width:400px;height:11.90px;line-height:11.90px;font-size:8.5px;color:#f4f4f4;text-align:center;font-weight:bold;transform:scaleX(0.895);transform-origin:50% 50%;">-64</div>
<div class="a" style="left:233.20px;top:417.50px;width:2.20px;height:81.00px;background:#f0f2f4"></div>
<div class="a" style="left:228.30px;top:423.70px;width:11.00px;height:15.30px;background:#f5861c;border-radius:1.5px"></div>
<div class="a" style="left:228.30px;top:426.20px;width:11.00px;height:3.20px;background:linear-gradient(#fcd2a8,#fff2e4,#fcd2a8)"></div>
<div class="a" style="left:228.30px;top:432.60px;width:11.00px;height:3.50px;background:linear-gradient(#fcd2a8,#fff2e4,#fcd2a8)"></div>
<div class="a" style="left:201.10px;top:433.30px;width:10.10px;height:9.60px;background:#3a393f;border:1.2px solid #a4a4ac"></div>
<div class="a t" style="left:6.15px;top:432.35px;width:400px;height:11.90px;line-height:11.90px;font-size:8.5px;color:#f4f4f4;text-align:center;font-weight:bold;transform:scaleX(0.900);transform-origin:50% 50%;">M</div>
<div class="a" style="left:201.10px;top:445.45px;width:10.10px;height:9.60px;background:#3a393f;border:1.2px solid #a4a4ac"></div>
<div class="a t" style="left:6.15px;top:444.50px;width:400px;height:11.90px;line-height:11.90px;font-size:8.5px;color:#f4f4f4;text-align:center;font-weight:bold;transform:scaleX(0.900);transform-origin:50% 50%;">+</div>
<div class="a" style="left:200.80px;top:456.80px;width:10.70px;height:11.20px;background:#f07818"></div>
<div class="a t" style="left:6.15px;top:456.65px;width:400px;height:11.90px;line-height:11.90px;font-size:8.5px;color:#4a1c00;text-align:center;font-weight:bold;transform:scaleX(0.900);transform-origin:50% 50%;">N</div>
<div class="a" style="left:200.80px;top:468.95px;width:10.70px;height:11.20px;background:#f07818"></div>
<div class="a t" style="left:6.15px;top:468.80px;width:400px;height:11.90px;line-height:11.90px;font-size:8.5px;color:#4a1c00;text-align:center;font-weight:bold;transform:scaleX(0.900);transform-origin:50% 50%;">E</div>
<div class="a" style="left:201.10px;top:481.90px;width:10.10px;height:9.60px;background:#3a393f;border:1.2px solid #a4a4ac"></div>
<div class="a t" style="left:6.15px;top:480.95px;width:400px;height:11.90px;line-height:11.90px;font-size:8.5px;color:#f4f4f4;text-align:center;font-weight:bold;transform:scaleX(0.900);transform-origin:50% 50%;">D</div>
<div class="a" style="left:246.90px;top:368.00px;width:41.50px;height:142.00px;background:#38363d;border-radius:6px 6px 0 0"></div>
<div class="a" style="left:247.90px;top:368.00px;width:41.20px;height:14.10px;background:#1ec46e;border-radius:6px 6px 0 0"></div>
<div class="a t" style="left:68.50px;top:369.45px;width:400px;height:14.70px;line-height:14.70px;font-size:10.5px;color:#e2fcec;text-align:center;transform:scaleX(0.779);transform-origin:50% 50%;">IN B</div>
<div class="a" style="left:249.80px;top:388.20px;width:37.40px;height:14.60px;background:#040404;border:1.4px solid #cdcdcd"></div>
<div class="a t" style="left:68.50px;top:388.25px;width:400px;height:14.70px;line-height:14.70px;font-size:10.5px;color:#eeeeee;text-align:center;transform:scaleX(0.808);transform-origin:50% 50%;">0.0</div>
<div class="a" style="left:261.50px;top:408.40px;width:14.00px;height:99.60px;border:1.3px solid #cfcfd2;background:#2c2b31"></div>
<div class="a t" style="left:68.50px;top:408.25px;width:400px;height:11.90px;line-height:11.90px;font-size:8.5px;color:#f4f4f4;text-align:center;font-weight:bold;transform:scaleX(1.058);transform-origin:50% 50%;">6</div>
<div class="a" style="left:261.50px;top:418.90px;width:14.00px;height:1.80px;background:#efefef"></div>
<div class="a" style="left:262.90px;top:425.00px;width:10.80px;height:1.60px;background:#c4c4cc"></div>
<div class="a" style="left:262.90px;top:430.00px;width:10.80px;height:1.60px;background:#c4c4cc"></div>
<div class="a" style="left:261.50px;top:435.00px;width:14.00px;height:2.00px;background:#f0f0f0"></div>
<div class="a" style="left:262.90px;top:440.00px;width:10.80px;height:1.60px;background:#c4c4cc"></div>
<div class="a" style="left:262.90px;top:445.00px;width:10.80px;height:1.60px;background:#c4c4cc"></div>
<div class="a" style="left:262.90px;top:450.00px;width:10.80px;height:1.60px;background:#c4c4cc"></div>
<div class="a" style="left:262.90px;top:455.00px;width:10.80px;height:1.60px;background:#c4c4cc"></div>
<div class="a" style="left:262.90px;top:460.00px;width:10.80px;height:1.60px;background:#c4c4cc"></div>
<div class="a" style="left:262.90px;top:466.00px;width:10.80px;height:1.60px;background:#c4c4cc"></div>
<div class="a" style="left:262.90px;top:471.00px;width:10.80px;height:1.60px;background:#c4c4cc"></div>
<div class="a" style="left:262.90px;top:476.00px;width:10.80px;height:1.60px;background:#c4c4cc"></div>
<div class="a" style="left:262.90px;top:481.00px;width:10.80px;height:1.60px;background:#c4c4cc"></div>
<div class="a" style="left:262.90px;top:486.00px;width:10.80px;height:1.60px;background:#c4c4cc"></div>
<div class="a" style="left:262.90px;top:491.00px;width:10.80px;height:1.60px;background:#c4c4cc"></div>
<div class="a" style="left:262.90px;top:496.00px;width:10.80px;height:1.60px;background:#c4c4cc"></div>
<div class="a" style="left:261.50px;top:496.80px;width:14.00px;height:1.50px;background:#e0e0e0"></div>
<div class="a t" style="left:68.50px;top:496.55px;width:400px;height:11.90px;line-height:11.90px;font-size:8.5px;color:#f4f4f4;text-align:center;font-weight:bold;transform:scaleX(0.895);transform-origin:50% 50%;">-64</div>
<div class="a" style="left:281.80px;top:417.50px;width:2.20px;height:81.00px;background:#f0f2f4"></div>
<div class="a" style="left:276.90px;top:423.70px;width:11.00px;height:15.30px;background:#f5861c;border-radius:1.5px"></div>
<div class="a" style="left:276.90px;top:426.20px;width:11.00px;height:3.20px;background:linear-gradient(#fcd2a8,#fff2e4,#fcd2a8)"></div>
<div class="a" style="left:276.90px;top:432.60px;width:11.00px;height:3.50px;background:linear-gradient(#fcd2a8,#fff2e4,#fcd2a8)"></div>
<div class="a" style="left:249.70px;top:433.30px;width:10.10px;height:9.60px;background:#3a393f;border:1.2px solid #a4a4ac"></div>
<div class="a t" style="left:54.75px;top:432.35px;width:400px;height:11.90px;line-height:11.90px;font-size:8.5px;color:#f4f4f4;text-align:center;font-weight:bold;transform:scaleX(0.900);transform-origin:50% 50%;">M</div>
<div class="a" style="left:249.70px;top:445.45px;width:10.10px;height:9.60px;background:#3a393f;border:1.2px solid #a4a4ac"></div>
<div class="a t" style="left:54.75px;top:444.50px;width:400px;height:11.90px;line-height:11.90px;font-size:8.5px;color:#f4f4f4;text-align:center;font-weight:bold;transform:scaleX(0.900);transform-origin:50% 50%;">+</div>
<div class="a" style="left:249.70px;top:457.60px;width:10.10px;height:9.60px;background:#3a393f;border:1.2px solid #a4a4ac"></div>
<div class="a t" style="left:54.75px;top:456.65px;width:400px;height:11.90px;line-height:11.90px;font-size:8.5px;color:#f4f4f4;text-align:center;font-weight:bold;transform:scaleX(0.900);transform-origin:50% 50%;">N</div>
<div class="a" style="left:249.70px;top:469.75px;width:10.10px;height:9.60px;background:#3a393f;border:1.2px solid #a4a4ac"></div>
<div class="a t" style="left:54.75px;top:468.80px;width:400px;height:11.90px;line-height:11.90px;font-size:8.5px;color:#f4f4f4;text-align:center;font-weight:bold;transform:scaleX(0.900);transform-origin:50% 50%;">E</div>
<div class="a" style="left:249.70px;top:481.90px;width:10.10px;height:9.60px;background:#3a393f;border:1.2px solid #a4a4ac"></div>
<div class="a t" style="left:54.75px;top:480.95px;width:400px;height:11.90px;line-height:11.90px;font-size:8.5px;color:#f4f4f4;text-align:center;font-weight:bold;transform:scaleX(0.900);transform-origin:50% 50%;">D</div>
<div class="a" style="left:295.80px;top:368.00px;width:41.50px;height:142.00px;background:#38363d;border-radius:6px 6px 0 0"></div>
<div class="a" style="left:296.80px;top:368.00px;width:41.20px;height:14.10px;background:#1ec46e;border-radius:6px 6px 0 0"></div>
<div class="a t" style="left:117.40px;top:369.45px;width:400px;height:14.70px;line-height:14.70px;font-size:10.5px;color:#e2fcec;text-align:center;transform:scaleX(0.757);transform-origin:50% 50%;">IN C</div>
<div class="a" style="left:298.70px;top:388.20px;width:37.40px;height:14.60px;background:#040404;border:1.4px solid #cdcdcd"></div>
<div class="a t" style="left:117.40px;top:388.25px;width:400px;height:14.70px;line-height:14.70px;font-size:10.5px;color:#eeeeee;text-align:center;transform:scaleX(0.808);transform-origin:50% 50%;">0.0</div>
<div class="a" style="left:310.40px;top:408.40px;width:14.00px;height:99.60px;border:1.3px solid #cfcfd2;background:#2c2b31"></div>
<div class="a t" style="left:117.40px;top:408.25px;width:400px;height:11.90px;line-height:11.90px;font-size:8.5px;color:#f4f4f4;text-align:center;font-weight:bold;transform:scaleX(1.058);transform-origin:50% 50%;">6</div>
<div class="a" style="left:310.40px;top:418.90px;width:14.00px;height:1.80px;background:#efefef"></div>
<div class="a" style="left:311.80px;top:425.00px;width:10.80px;height:1.60px;background:#c4c4cc"></div>
<div class="a" style="left:311.80px;top:430.00px;width:10.80px;height:1.60px;background:#c4c4cc"></div>
<div class="a" style="left:310.40px;top:435.00px;width:14.00px;height:2.00px;background:#f0f0f0"></div>
<div class="a" style="left:311.80px;top:440.00px;width:10.80px;height:1.60px;background:#c4c4cc"></div>
<div class="a" style="left:311.80px;top:445.00px;width:10.80px;height:1.60px;background:#c4c4cc"></div>
<div class="a" style="left:311.80px;top:450.00px;width:10.80px;height:1.60px;background:#c4c4cc"></div>
<div class="a" style="left:311.80px;top:455.00px;width:10.80px;height:1.60px;background:#c4c4cc"></div>
<div class="a" style="left:311.80px;top:460.00px;width:10.80px;height:1.60px;background:#c4c4cc"></div>
<div class="a" style="left:311.80px;top:466.00px;width:10.80px;height:1.60px;background:#c4c4cc"></div>
<div class="a" style="left:311.80px;top:471.00px;width:10.80px;height:1.60px;background:#c4c4cc"></div>
<div class="a" style="left:311.80px;top:476.00px;width:10.80px;height:1.60px;background:#c4c4cc"></div>
<div class="a" style="left:311.80px;top:481.00px;width:10.80px;height:1.60px;background:#c4c4cc"></div>
<div class="a" style="left:311.80px;top:486.00px;width:10.80px;height:1.60px;background:#c4c4cc"></div>
<div class="a" style="left:311.80px;top:491.00px;width:10.80px;height:1.60px;background:#c4c4cc"></div>
<div class="a" style="left:311.80px;top:496.00px;width:10.80px;height:1.60px;background:#c4c4cc"></div>
<div class="a" style="left:310.40px;top:496.80px;width:14.00px;height:1.50px;background:#e0e0e0"></div>
<div class="a t" style="left:117.40px;top:496.55px;width:400px;height:11.90px;line-height:11.90px;font-size:8.5px;color:#f4f4f4;text-align:center;font-weight:bold;transform:scaleX(0.895);transform-origin:50% 50%;">-64</div>
<div class="a" style="left:330.70px;top:417.50px;width:2.20px;height:81.00px;background:#f0f2f4"></div>
<div class="a" style="left:325.80px;top:423.70px;width:11.00px;height:15.30px;background:#f5861c;border-radius:1.5px"></div>
<div class="a" style="left:325.80px;top:426.20px;width:11.00px;height:3.20px;background:linear-gradient(#fcd2a8,#fff2e4,#fcd2a8)"></div>
<div class="a" style="left:325.80px;top:432.60px;width:11.00px;height:3.50px;background:linear-gradient(#fcd2a8,#fff2e4,#fcd2a8)"></div>
<div class="a" style="left:298.60px;top:433.30px;width:10.10px;height:9.60px;background:#3a393f;border:1.2px solid #a4a4ac"></div>
<div class="a t" style="left:103.65px;top:432.35px;width:400px;height:11.90px;line-height:11.90px;font-size:8.5px;color:#f4f4f4;text-align:center;font-weight:bold;transform:scaleX(0.900);transform-origin:50% 50%;">M</div>
<div class="a" style="left:298.60px;top:445.45px;width:10.10px;height:9.60px;background:#3a393f;border:1.2px solid #a4a4ac"></div>
<div class="a t" style="left:103.65px;top:444.50px;width:400px;height:11.90px;line-height:11.90px;font-size:8.5px;color:#f4f4f4;text-align:center;font-weight:bold;transform:scaleX(0.900);transform-origin:50% 50%;">+</div>
<div class="a" style="left:298.60px;top:457.60px;width:10.10px;height:9.60px;background:#3a393f;border:1.2px solid #a4a4ac"></div>
<div class="a t" style="left:103.65px;top:456.65px;width:400px;height:11.90px;line-height:11.90px;font-size:8.5px;color:#f4f4f4;text-align:center;font-weight:bold;transform:scaleX(0.900);transform-origin:50% 50%;">N</div>
<div class="a" style="left:298.60px;top:469.75px;width:10.10px;height:9.60px;background:#3a393f;border:1.2px solid #a4a4ac"></div>
<div class="a t" style="left:103.65px;top:468.80px;width:400px;height:11.90px;line-height:11.90px;font-size:8.5px;color:#f4f4f4;text-align:center;font-weight:bold;transform:scaleX(0.900);transform-origin:50% 50%;">E</div>
<div class="a" style="left:298.60px;top:481.90px;width:10.10px;height:9.60px;background:#3a393f;border:1.2px solid #a4a4ac"></div>
<div class="a t" style="left:103.65px;top:480.95px;width:400px;height:11.90px;line-height:11.90px;font-size:8.5px;color:#f4f4f4;text-align:center;font-weight:bold;transform:scaleX(0.900);transform-origin:50% 50%;">D</div>
<div class="a" style="left:344.70px;top:368.00px;width:41.50px;height:142.00px;background:#38363d;border-radius:6px 6px 0 0"></div>
<div class="a" style="left:345.70px;top:368.00px;width:41.20px;height:14.10px;background:#1ec46e;border-radius:6px 6px 0 0"></div>
<div class="a t" style="left:166.30px;top:369.45px;width:400px;height:14.70px;line-height:14.70px;font-size:10.5px;color:#e2fcec;text-align:center;transform:scaleX(0.757);transform-origin:50% 50%;">IN D</div>
<div class="a" style="left:347.60px;top:388.20px;width:37.40px;height:14.60px;background:#040404;border:1.4px solid #cdcdcd"></div>
<div class="a t" style="left:166.30px;top:388.25px;width:400px;height:14.70px;line-height:14.70px;font-size:10.5px;color:#eeeeee;text-align:center;transform:scaleX(0.808);transform-origin:50% 50%;">0.0</div>
<div class="a" style="left:359.30px;top:408.40px;width:14.00px;height:99.60px;border:1.3px solid #cfcfd2;background:#2c2b31"></div>
<div class="a t" style="left:166.30px;top:408.25px;width:400px;height:11.90px;line-height:11.90px;font-size:8.5px;color:#f4f4f4;text-align:center;font-weight:bold;transform:scaleX(1.058);transform-origin:50% 50%;">6</div>
<div class="a" style="left:359.30px;top:418.90px;width:14.00px;height:1.80px;background:#efefef"></div>
<div class="a" style="left:360.70px;top:425.00px;width:10.80px;height:1.60px;background:#c4c4cc"></div>
<div class="a" style="left:360.70px;top:430.00px;width:10.80px;height:1.60px;background:#c4c4cc"></div>
<div class="a" style="left:359.30px;top:435.00px;width:14.00px;height:2.00px;background:#f0f0f0"></div>
<div class="a" style="left:360.70px;top:440.00px;width:10.80px;height:1.60px;background:#c4c4cc"></div>
<div class="a" style="left:360.70px;top:445.00px;width:10.80px;height:1.60px;background:#c4c4cc"></div>
<div class="a" style="left:360.70px;top:450.00px;width:10.80px;height:1.60px;background:#c4c4cc"></div>
<div class="a" style="left:360.70px;top:455.00px;width:10.80px;height:1.60px;background:#c4c4cc"></div>
<div class="a" style="left:360.70px;top:460.00px;width:10.80px;height:1.60px;background:#c4c4cc"></div>
<div class="a" style="left:360.70px;top:466.00px;width:10.80px;height:1.60px;background:#c4c4cc"></div>
<div class="a" style="left:360.70px;top:471.00px;width:10.80px;height:1.60px;background:#c4c4cc"></div>
<div class="a" style="left:360.70px;top:476.00px;width:10.80px;height:1.60px;background:#c4c4cc"></div>
<div class="a" style="left:360.70px;top:481.00px;width:10.80px;height:1.60px;background:#c4c4cc"></div>
<div class="a" style="left:360.70px;top:486.00px;width:10.80px;height:1.60px;background:#c4c4cc"></div>
<div class="a" style="left:360.70px;top:491.00px;width:10.80px;height:1.60px;background:#c4c4cc"></div>
<div class="a" style="left:360.70px;top:496.00px;width:10.80px;height:1.60px;background:#c4c4cc"></div>
<div class="a" style="left:359.30px;top:496.80px;width:14.00px;height:1.50px;background:#e0e0e0"></div>
<div class="a t" style="left:166.30px;top:496.55px;width:400px;height:11.90px;line-height:11.90px;font-size:8.5px;color:#f4f4f4;text-align:center;font-weight:bold;transform:scaleX(0.895);transform-origin:50% 50%;">-64</div>
<div class="a" style="left:379.60px;top:417.50px;width:2.20px;height:81.00px;background:#f0f2f4"></div>
<div class="a" style="left:374.70px;top:423.70px;width:11.00px;height:15.30px;background:#f5861c;border-radius:1.5px"></div>
<div class="a" style="left:374.70px;top:426.20px;width:11.00px;height:3.20px;background:linear-gradient(#fcd2a8,#fff2e4,#fcd2a8)"></div>
<div class="a" style="left:374.70px;top:432.60px;width:11.00px;height:3.50px;background:linear-gradient(#fcd2a8,#fff2e4,#fcd2a8)"></div>
<div class="a" style="left:347.50px;top:433.30px;width:10.10px;height:9.60px;background:#3a393f;border:1.2px solid #a4a4ac"></div>
<div class="a t" style="left:152.55px;top:432.35px;width:400px;height:11.90px;line-height:11.90px;font-size:8.5px;color:#f4f4f4;text-align:center;font-weight:bold;transform:scaleX(0.900);transform-origin:50% 50%;">M</div>
<div class="a" style="left:347.50px;top:445.45px;width:10.10px;height:9.60px;background:#3a393f;border:1.2px solid #a4a4ac"></div>
<div class="a t" style="left:152.55px;top:444.50px;width:400px;height:11.90px;line-height:11.90px;font-size:8.5px;color:#f4f4f4;text-align:center;font-weight:bold;transform:scaleX(0.900);transform-origin:50% 50%;">+</div>
<div class="a" style="left:347.50px;top:457.60px;width:10.10px;height:9.60px;background:#3a393f;border:1.2px solid #a4a4ac"></div>
<div class="a t" style="left:152.55px;top:456.65px;width:400px;height:11.90px;line-height:11.90px;font-size:8.5px;color:#f4f4f4;text-align:center;font-weight:bold;transform:scaleX(0.900);transform-origin:50% 50%;">N</div>
<div class="a" style="left:347.50px;top:469.75px;width:10.10px;height:9.60px;background:#3a393f;border:1.2px solid #a4a4ac"></div>
<div class="a t" style="left:152.55px;top:468.80px;width:400px;height:11.90px;line-height:11.90px;font-size:8.5px;color:#f4f4f4;text-align:center;font-weight:bold;transform:scaleX(0.900);transform-origin:50% 50%;">E</div>
<div class="a" style="left:347.50px;top:481.90px;width:10.10px;height:9.60px;background:#3a393f;border:1.2px solid #a4a4ac"></div>
<div class="a t" style="left:152.55px;top:480.95px;width:400px;height:11.90px;line-height:11.90px;font-size:8.5px;color:#f4f4f4;text-align:center;font-weight:bold;transform:scaleX(0.900);transform-origin:50% 50%;">D</div>
<div class="a" style="left:393.60px;top:368.00px;width:41.50px;height:142.00px;background:#38363d;border-radius:6px 6px 0 0"></div>
<div class="a" style="left:394.60px;top:368.00px;width:41.20px;height:14.10px;background:#1ec46e;border-radius:6px 6px 0 0"></div>
<div class="a t" style="left:215.20px;top:369.45px;width:400px;height:14.70px;line-height:14.70px;font-size:10.5px;color:#e2fcec;text-align:center;transform:scaleX(0.779);transform-origin:50% 50%;">IN E</div>
<div class="a" style="left:396.50px;top:388.20px;width:37.40px;height:14.60px;background:#040404;border:1.4px solid #cdcdcd"></div>
<div class="a t" style="left:215.20px;top:388.25px;width:400px;height:14.70px;line-height:14.70px;font-size:10.5px;color:#eeeeee;text-align:center;transform:scaleX(0.808);transform-origin:50% 50%;">0.0</div>
<div class="a" style="left:408.20px;top:408.40px;width:14.00px;height:99.60px;border:1.3px solid #cfcfd2;background:#2c2b31"></div>
<div class="a t" style="left:215.20px;top:408.25px;width:400px;height:11.90px;line-height:11.90px;font-size:8.5px;color:#f4f4f4;text-align:center;font-weight:bold;transform:scaleX(1.058);transform-origin:50% 50%;">6</div>
<div class="a" style="left:408.20px;top:418.90px;width:14.00px;height:1.80px;background:#efefef"></div>
<div class="a" style="left:409.60px;top:425.00px;width:10.80px;height:1.60px;background:#c4c4cc"></div>
<div class="a" style="left:409.60px;top:430.00px;width:10.80px;height:1.60px;background:#c4c4cc"></div>
<div class="a" style="left:408.20px;top:435.00px;width:14.00px;height:2.00px;background:#f0f0f0"></div>
<div class="a" style="left:409.60px;top:440.00px;width:10.80px;height:1.60px;background:#c4c4cc"></div>
<div class="a" style="left:409.60px;top:445.00px;width:10.80px;height:1.60px;background:#c4c4cc"></div>
<div class="a" style="left:409.60px;top:450.00px;width:10.80px;height:1.60px;background:#c4c4cc"></div>
<div class="a" style="left:409.60px;top:455.00px;width:10.80px;height:1.60px;background:#c4c4cc"></div>
<div class="a" style="left:409.60px;top:460.00px;width:10.80px;height:1.60px;background:#c4c4cc"></div>
<div class="a" style="left:409.60px;top:466.00px;width:10.80px;height:1.60px;background:#c4c4cc"></div>
<div class="a" style="left:409.60px;top:471.00px;width:10.80px;height:1.60px;background:#c4c4cc"></div>
<div class="a" style="left:409.60px;top:476.00px;width:10.80px;height:1.60px;background:#c4c4cc"></div>
<div class="a" style="left:409.60px;top:481.00px;width:10.80px;height:1.60px;background:#c4c4cc"></div>
<div class="a" style="left:409.60px;top:486.00px;width:10.80px;height:1.60px;background:#c4c4cc"></div>
<div class="a" style="left:409.60px;top:491.00px;width:10.80px;height:1.60px;background:#c4c4cc"></div>
<div class="a" style="left:409.60px;top:496.00px;width:10.80px;height:1.60px;background:#c4c4cc"></div>
<div class="a" style="left:408.20px;top:496.80px;width:14.00px;height:1.50px;background:#e0e0e0"></div>
<div class="a t" style="left:215.20px;top:496.55px;width:400px;height:11.90px;line-height:11.90px;font-size:8.5px;color:#f4f4f4;text-align:center;font-weight:bold;transform:scaleX(0.895);transform-origin:50% 50%;">-64</div>
<div class="a" style="left:428.50px;top:417.50px;width:2.20px;height:81.00px;background:#f0f2f4"></div>
<div class="a" style="left:423.60px;top:423.70px;width:11.00px;height:15.30px;background:#f5861c;border-radius:1.5px"></div>
<div class="a" style="left:423.60px;top:426.20px;width:11.00px;height:3.20px;background:linear-gradient(#fcd2a8,#fff2e4,#fcd2a8)"></div>
<div class="a" style="left:423.60px;top:432.60px;width:11.00px;height:3.50px;background:linear-gradient(#fcd2a8,#fff2e4,#fcd2a8)"></div>
<div class="a" style="left:396.40px;top:433.30px;width:10.10px;height:9.60px;background:#3a393f;border:1.2px solid #a4a4ac"></div>
<div class="a t" style="left:201.45px;top:432.35px;width:400px;height:11.90px;line-height:11.90px;font-size:8.5px;color:#f4f4f4;text-align:center;font-weight:bold;transform:scaleX(0.900);transform-origin:50% 50%;">M</div>
<div class="a" style="left:396.40px;top:445.45px;width:10.10px;height:9.60px;background:#3a393f;border:1.2px solid #a4a4ac"></div>
<div class="a t" style="left:201.45px;top:444.50px;width:400px;height:11.90px;line-height:11.90px;font-size:8.5px;color:#f4f4f4;text-align:center;font-weight:bold;transform:scaleX(0.900);transform-origin:50% 50%;">+</div>
<div class="a" style="left:396.40px;top:457.60px;width:10.10px;height:9.60px;background:#3a393f;border:1.2px solid #a4a4ac"></div>
<div class="a t" style="left:201.45px;top:456.65px;width:400px;height:11.90px;line-height:11.90px;font-size:8.5px;color:#f4f4f4;text-align:center;font-weight:bold;transform:scaleX(0.900);transform-origin:50% 50%;">N</div>
<div class="a" style="left:396.40px;top:469.75px;width:10.10px;height:9.60px;background:#3a393f;border:1.2px solid #a4a4ac"></div>
<div class="a t" style="left:201.45px;top:468.80px;width:400px;height:11.90px;line-height:11.90px;font-size:8.5px;color:#f4f4f4;text-align:center;font-weight:bold;transform:scaleX(0.900);transform-origin:50% 50%;">E</div>
<div class="a" style="left:396.40px;top:481.90px;width:10.10px;height:9.60px;background:#3a393f;border:1.2px solid #a4a4ac"></div>
<div class="a t" style="left:201.45px;top:480.95px;width:400px;height:11.90px;line-height:11.90px;font-size:8.5px;color:#f4f4f4;text-align:center;font-weight:bold;transform:scaleX(0.900);transform-origin:50% 50%;">D</div>
<div class="a" style="left:442.50px;top:368.00px;width:41.50px;height:142.00px;background:#38363d;border-radius:6px 6px 0 0"></div>
<div class="a" style="left:443.50px;top:368.00px;width:41.20px;height:14.10px;background:#1ec46e;border-radius:6px 6px 0 0"></div>
<div class="a t" style="left:264.10px;top:369.45px;width:400px;height:14.70px;line-height:14.70px;font-size:10.5px;color:#e2fcec;text-align:center;transform:scaleX(0.802);transform-origin:50% 50%;">IN F</div>
<div class="a" style="left:445.40px;top:388.20px;width:37.40px;height:14.60px;background:#040404;border:1.4px solid #cdcdcd"></div>
<div class="a t" style="left:264.10px;top:388.25px;width:400px;height:14.70px;line-height:14.70px;font-size:10.5px;color:#eeeeee;text-align:center;transform:scaleX(0.808);transform-origin:50% 50%;">0.0</div>
<div class="a" style="left:457.10px;top:408.40px;width:14.00px;height:99.60px;border:1.3px solid #cfcfd2;background:#2c2b31"></div>
<div class="a t" style="left:264.10px;top:408.25px;width:400px;height:11.90px;line-height:11.90px;font-size:8.5px;color:#f4f4f4;text-align:center;font-weight:bold;transform:scaleX(1.058);transform-origin:50% 50%;">6</div>
<div class="a" style="left:457.10px;top:418.90px;width:14.00px;height:1.80px;background:#efefef"></div>
<div class="a" style="left:458.50px;top:425.00px;width:10.80px;height:1.60px;background:#c4c4cc"></div>
<div class="a" style="left:458.50px;top:430.00px;width:10.80px;height:1.60px;background:#c4c4cc"></div>
<div class="a" style="left:457.10px;top:435.00px;width:14.00px;height:2.00px;background:#f0f0f0"></div>
<div class="a" style="left:458.50px;top:440.00px;width:10.80px;height:1.60px;background:#c4c4cc"></div>
<div class="a" style="left:458.50px;top:445.00px;width:10.80px;height:1.60px;background:#c4c4cc"></div>
<div class="a" style="left:458.50px;top:450.00px;width:10.80px;height:1.60px;background:#c4c4cc"></div>
<div class="a" style="left:458.50px;top:455.00px;width:10.80px;height:1.60px;background:#c4c4cc"></div>
<div class="a" style="left:458.50px;top:460.00px;width:10.80px;height:1.60px;background:#c4c4cc"></div>
<div class="a" style="left:458.50px;top:466.00px;width:10.80px;height:1.60px;background:#c4c4cc"></div>
<div class="a" style="left:458.50px;top:471.00px;width:10.80px;height:1.60px;background:#c4c4cc"></div>
<div class="a" style="left:458.50px;top:476.00px;width:10.80px;height:1.60px;background:#c4c4cc"></div>
<div class="a" style="left:458.50px;top:481.00px;width:10.80px;height:1.60px;background:#c4c4cc"></div>
<div class="a" style="left:458.50px;top:486.00px;width:10.80px;height:1.60px;background:#c4c4cc"></div>
<div class="a" style="left:458.50px;top:491.00px;width:10.80px;height:1.60px;background:#c4c4cc"></div>
<div class="a" style="left:458.50px;top:496.00px;width:10.80px;height:1.60px;background:#c4c4cc"></div>
<div class="a" style="left:457.10px;top:496.80px;width:14.00px;height:1.50px;background:#e0e0e0"></div>
<div class="a t" style="left:264.10px;top:496.55px;width:400px;height:11.90px;line-height:11.90px;font-size:8.5px;color:#f4f4f4;text-align:center;font-weight:bold;transform:scaleX(0.895);transform-origin:50% 50%;">-64</div>
<div class="a" style="left:477.40px;top:417.50px;width:2.20px;height:81.00px;background:#f0f2f4"></div>
<div class="a" style="left:472.50px;top:423.70px;width:11.00px;height:15.30px;background:#f5861c;border-radius:1.5px"></div>
<div class="a" style="left:472.50px;top:426.20px;width:11.00px;height:3.20px;background:linear-gradient(#fcd2a8,#fff2e4,#fcd2a8)"></div>
<div class="a" style="left:472.50px;top:432.60px;width:11.00px;height:3.50px;background:linear-gradient(#fcd2a8,#fff2e4,#fcd2a8)"></div>
<div class="a" style="left:445.30px;top:433.30px;width:10.10px;height:9.60px;background:#3a393f;border:1.2px solid #a4a4ac"></div>
<div class="a t" style="left:250.35px;top:432.35px;width:400px;height:11.90px;line-height:11.90px;font-size:8.5px;color:#f4f4f4;text-align:center;font-weight:bold;transform:scaleX(0.900);transform-origin:50% 50%;">M</div>
<div class="a" style="left:445.30px;top:445.45px;width:10.10px;height:9.60px;background:#3a393f;border:1.2px solid #a4a4ac"></div>
<div class="a t" style="left:250.35px;top:444.50px;width:400px;height:11.90px;line-height:11.90px;font-size:8.5px;color:#f4f4f4;text-align:center;font-weight:bold;transform:scaleX(0.900);transform-origin:50% 50%;">+</div>
<div class="a" style="left:445.30px;top:457.60px;width:10.10px;height:9.60px;background:#3a393f;border:1.2px solid #a4a4ac"></div>
<div class="a t" style="left:250.35px;top:456.65px;width:400px;height:11.90px;line-height:11.90px;font-size:8.5px;color:#f4f4f4;text-align:center;font-weight:bold;transform:scaleX(0.900);transform-origin:50% 50%;">N</div>
<div class="a" style="left:445.30px;top:469.75px;width:10.10px;height:9.60px;background:#3a393f;border:1.2px solid #a4a4ac"></div>
<div class="a t" style="left:250.35px;top:468.80px;width:400px;height:11.90px;line-height:11.90px;font-size:8.5px;color:#f4f4f4;text-align:center;font-weight:bold;transform:scaleX(0.900);transform-origin:50% 50%;">E</div>
<div class="a" style="left:445.30px;top:481.90px;width:10.10px;height:9.60px;background:#3a393f;border:1.2px solid #a4a4ac"></div>
<div class="a t" style="left:250.35px;top:480.95px;width:400px;height:11.90px;line-height:11.90px;font-size:8.5px;color:#f4f4f4;text-align:center;font-weight:bold;transform:scaleX(0.900);transform-origin:50% 50%;">D</div>
<div class="a" style="left:491.40px;top:368.00px;width:41.50px;height:142.00px;background:#38363d;border-radius:6px 6px 0 0"></div>
<div class="a" style="left:492.40px;top:368.00px;width:41.20px;height:14.10px;background:#1ec46e;border-radius:6px 6px 0 0"></div>
<div class="a t" style="left:313.00px;top:369.45px;width:400px;height:14.70px;line-height:14.70px;font-size:10.5px;color:#e2fcec;text-align:center;transform:scaleX(0.737);transform-origin:50% 50%;">IN G</div>
<div class="a" style="left:494.30px;top:388.20px;width:37.40px;height:14.60px;background:#040404;border:1.4px solid #cdcdcd"></div>
<div class="a t" style="left:313.00px;top:388.25px;width:400px;height:14.70px;line-height:14.70px;font-size:10.5px;color:#eeeeee;text-align:center;transform:scaleX(0.808);transform-origin:50% 50%;">0.0</div>
<div class="a" style="left:506.00px;top:408.40px;width:14.00px;height:99.60px;border:1.3px solid #cfcfd2;background:#2c2b31"></div>
<div class="a t" style="left:313.00px;top:408.25px;width:400px;height:11.90px;line-height:11.90px;font-size:8.5px;color:#f4f4f4;text-align:center;font-weight:bold;transform:scaleX(1.058);transform-origin:50% 50%;">6</div>
<div class="a" style="left:506.00px;top:418.90px;width:14.00px;height:1.80px;background:#efefef"></div>
<div class="a" style="left:507.40px;top:425.00px;width:10.80px;height:1.60px;background:#c4c4cc"></div>
<div class="a" style="left:507.40px;top:430.00px;width:10.80px;height:1.60px;background:#c4c4cc"></div>
<div class="a" style="left:506.00px;top:435.00px;width:14.00px;height:2.00px;background:#f0f0f0"></div>
<div class="a" style="left:507.40px;top:440.00px;width:10.80px;height:1.60px;background:#c4c4cc"></div>
<div class="a" style="left:507.40px;top:445.00px;width:10.80px;height:1.60px;background:#c4c4cc"></div>
<div class="a" style="left:507.40px;top:450.00px;width:10.80px;height:1.60px;background:#c4c4cc"></div>
<div class="a" style="left:507.40px;top:455.00px;width:10.80px;height:1.60px;background:#c4c4cc"></div>
<div class="a" style="left:507.40px;top:460.00px;width:10.80px;height:1.60px;background:#c4c4cc"></div>
<div class="a" style="left:507.40px;top:466.00px;width:10.80px;height:1.60px;background:#c4c4cc"></div>
<div class="a" style="left:507.40px;top:471.00px;width:10.80px;height:1.60px;background:#c4c4cc"></div>
<div class="a" style="left:507.40px;top:476.00px;width:10.80px;height:1.60px;background:#c4c4cc"></div>
<div class="a" style="left:507.40px;top:481.00px;width:10.80px;height:1.60px;background:#c4c4cc"></div>
<div class="a" style="left:507.40px;top:486.00px;width:10.80px;height:1.60px;background:#c4c4cc"></div>
<div class="a" style="left:507.40px;top:491.00px;width:10.80px;height:1.60px;background:#c4c4cc"></div>
<div class="a" style="left:507.40px;top:496.00px;width:10.80px;height:1.60px;background:#c4c4cc"></div>
<div class="a" style="left:506.00px;top:496.80px;width:14.00px;height:1.50px;background:#e0e0e0"></div>
<div class="a t" style="left:313.00px;top:496.55px;width:400px;height:11.90px;line-height:11.90px;font-size:8.5px;color:#f4f4f4;text-align:center;font-weight:bold;transform:scaleX(0.895);transform-origin:50% 50%;">-64</div>
<div class="a" style="left:526.30px;top:417.50px;width:2.20px;height:81.00px;background:#f0f2f4"></div>
<div class="a" style="left:521.40px;top:423.70px;width:11.00px;height:15.30px;background:#f5861c;border-radius:1.5px"></div>
<div class="a" style="left:521.40px;top:426.20px;width:11.00px;height:3.20px;background:linear-gradient(#fcd2a8,#fff2e4,#fcd2a8)"></div>
<div class="a" style="left:521.40px;top:432.60px;width:11.00px;height:3.50px;background:linear-gradient(#fcd2a8,#fff2e4,#fcd2a8)"></div>
<div class="a" style="left:494.20px;top:433.30px;width:10.10px;height:9.60px;background:#3a393f;border:1.2px solid #a4a4ac"></div>
<div class="a t" style="left:299.25px;top:432.35px;width:400px;height:11.90px;line-height:11.90px;font-size:8.5px;color:#f4f4f4;text-align:center;font-weight:bold;transform:scaleX(0.900);transform-origin:50% 50%;">M</div>
<div class="a" style="left:494.20px;top:445.45px;width:10.10px;height:9.60px;background:#3a393f;border:1.2px solid #a4a4ac"></div>
<div class="a t" style="left:299.25px;top:444.50px;width:400px;height:11.90px;line-height:11.90px;font-size:8.5px;color:#f4f4f4;text-align:center;font-weight:bold;transform:scaleX(0.900);transform-origin:50% 50%;">+</div>
<div class="a" style="left:494.20px;top:457.60px;width:10.10px;height:9.60px;background:#3a393f;border:1.2px solid #a4a4ac"></div>
<div class="a t" style="left:299.25px;top:456.65px;width:400px;height:11.90px;line-height:11.90px;font-size:8.5px;color:#f4f4f4;text-align:center;font-weight:bold;transform:scaleX(0.900);transform-origin:50% 50%;">N</div>
<div class="a" style="left:494.20px;top:469.75px;width:10.10px;height:9.60px;background:#3a393f;border:1.2px solid #a4a4ac"></div>
<div class="a t" style="left:299.25px;top:468.80px;width:400px;height:11.90px;line-height:11.90px;font-size:8.5px;color:#f4f4f4;text-align:center;font-weight:bold;transform:scaleX(0.900);transform-origin:50% 50%;">E</div>
<div class="a" style="left:494.20px;top:481.90px;width:10.10px;height:9.60px;background:#3a393f;border:1.2px solid #a4a4ac"></div>
<div class="a t" style="left:299.25px;top:480.95px;width:400px;height:11.90px;line-height:11.90px;font-size:8.5px;color:#f4f4f4;text-align:center;font-weight:bold;transform:scaleX(0.900);transform-origin:50% 50%;">D</div>
<div class="a" style="left:540.30px;top:368.00px;width:41.50px;height:142.00px;background:#38363d;border-radius:6px 6px 0 0"></div>
<div class="a" style="left:541.30px;top:368.00px;width:41.20px;height:14.10px;background:#1ec46e;border-radius:6px 6px 0 0"></div>
<div class="a t" style="left:361.90px;top:369.45px;width:400px;height:14.70px;line-height:14.70px;font-size:10.5px;color:#e2fcec;text-align:center;transform:scaleX(0.757);transform-origin:50% 50%;">IN H</div>
<div class="a" style="left:543.20px;top:388.20px;width:37.40px;height:14.60px;background:#040404;border:1.4px solid #cdcdcd"></div>
<div class="a t" style="left:361.90px;top:388.25px;width:400px;height:14.70px;line-height:14.70px;font-size:10.5px;color:#eeeeee;text-align:center;transform:scaleX(0.808);transform-origin:50% 50%;">0.0</div>
<div class="a" style="left:554.90px;top:408.40px;width:14.00px;height:99.60px;border:1.3px solid #cfcfd2;background:#2c2b31"></div>
<div class="a t" style="left:361.90px;top:408.25px;width:400px;height:11.90px;line-height:11.90px;font-size:8.5px;color:#f4f4f4;text-align:center;font-weight:bold;transform:scaleX(1.058);transform-origin:50% 50%;">6</div>
<div class="a" style="left:554.90px;top:418.90px;width:14.00px;height:1.80px;background:#efefef"></div>
<div class="a" style="left:556.30px;top:425.00px;width:10.80px;height:1.60px;background:#c4c4cc"></div>
<div class="a" style="left:556.30px;top:430.00px;width:10.80px;height:1.60px;background:#c4c4cc"></div>
<div class="a" style="left:554.90px;top:435.00px;width:14.00px;height:2.00px;background:#f0f0f0"></div>
<div class="a" style="left:556.30px;top:440.00px;width:10.80px;height:1.60px;background:#c4c4cc"></div>
<div class="a" style="left:556.30px;top:445.00px;width:10.80px;height:1.60px;background:#c4c4cc"></div>
<div class="a" style="left:556.30px;top:450.00px;width:10.80px;height:1.60px;background:#c4c4cc"></div>
<div class="a" style="left:556.30px;top:455.00px;width:10.80px;height:1.60px;background:#c4c4cc"></div>
<div class="a" style="left:556.30px;top:460.00px;width:10.80px;height:1.60px;background:#c4c4cc"></div>
<div class="a" style="left:556.30px;top:466.00px;width:10.80px;height:1.60px;background:#c4c4cc"></div>
<div class="a" style="left:556.30px;top:471.00px;width:10.80px;height:1.60px;background:#c4c4cc"></div>
<div class="a" style="left:556.30px;top:476.00px;width:10.80px;height:1.60px;background:#c4c4cc"></div>
<div class="a" style="left:556.30px;top:481.00px;width:10.80px;height:1.60px;background:#c4c4cc"></div>
<div class="a" style="left:556.30px;top:486.00px;width:10.80px;height:1.60px;background:#c4c4cc"></div>
<div class="a" style="left:556.30px;top:491.00px;width:10.80px;height:1.60px;background:#c4c4cc"></div>
<div class="a" style="left:556.30px;top:496.00px;width:10.80px;height:1.60px;background:#c4c4cc"></div>
<div class="a" style="left:554.90px;top:496.80px;width:14.00px;height:1.50px;background:#e0e0e0"></div>
<div class="a t" style="left:361.90px;top:496.55px;width:400px;height:11.90px;line-height:11.90px;font-size:8.5px;color:#f4f4f4;text-align:center;font-weight:bold;transform:scaleX(0.895);transform-origin:50% 50%;">-64</div>
<div class="a" style="left:575.20px;top:417.50px;width:2.20px;height:81.00px;background:#f0f2f4"></div>
<div class="a" style="left:570.30px;top:423.70px;width:11.00px;height:15.30px;background:#f5861c;border-radius:1.5px"></div>
<div class="a" style="left:570.30px;top:426.20px;width:11.00px;height:3.20px;background:linear-gradient(#fcd2a8,#fff2e4,#fcd2a8)"></div>
<div class="a" style="left:570.30px;top:432.60px;width:11.00px;height:3.50px;background:linear-gradient(#fcd2a8,#fff2e4,#fcd2a8)"></div>
<div class="a" style="left:543.10px;top:433.30px;width:10.10px;height:9.60px;background:#3a393f;border:1.2px solid #a4a4ac"></div>
<div class="a t" style="left:348.15px;top:432.35px;width:400px;height:11.90px;line-height:11.90px;font-size:8.5px;color:#f4f4f4;text-align:center;font-weight:bold;transform:scaleX(0.900);transform-origin:50% 50%;">M</div>
<div class="a" style="left:543.10px;top:445.45px;width:10.10px;height:9.60px;background:#3a393f;border:1.2px solid #a4a4ac"></div>
<div class="a t" style="left:348.15px;top:444.50px;width:400px;height:11.90px;line-height:11.90px;font-size:8.5px;color:#f4f4f4;text-align:center;font-weight:bold;transform:scaleX(0.900);transform-origin:50% 50%;">+</div>
<div class="a" style="left:543.10px;top:457.60px;width:10.10px;height:9.60px;background:#3a393f;border:1.2px solid #a4a4ac"></div>
<div class="a t" style="left:348.15px;top:456.65px;width:400px;height:11.90px;line-height:11.90px;font-size:8.5px;color:#f4f4f4;text-align:center;font-weight:bold;transform:scaleX(0.900);transform-origin:50% 50%;">N</div>
<div class="a" style="left:543.10px;top:469.75px;width:10.10px;height:9.60px;background:#3a393f;border:1.2px solid #a4a4ac"></div>
<div class="a t" style="left:348.15px;top:468.80px;width:400px;height:11.90px;line-height:11.90px;font-size:8.5px;color:#f4f4f4;text-align:center;font-weight:bold;transform:scaleX(0.900);transform-origin:50% 50%;">E</div>
<div class="a" style="left:543.10px;top:481.90px;width:10.10px;height:9.60px;background:#3a393f;border:1.2px solid #a4a4ac"></div>
<div class="a t" style="left:348.15px;top:480.95px;width:400px;height:11.90px;line-height:11.90px;font-size:8.5px;color:#f4f4f4;text-align:center;font-weight:bold;transform:scaleX(0.900);transform-origin:50% 50%;">D</div>
<div class="a" style="left:588.40px;top:392.20px;width:22.70px;height:114.80px;border:1.2px solid #b4b4bc;border-radius:2px"></div>
<div class="a" style="left:594.70px;top:432.30px;width:10.10px;height:9.60px;background:#3a393f;border:1.2px solid #a4a4ac"></div>
<div class="a t" style="left:399.75px;top:431.35px;width:400px;height:11.90px;line-height:11.90px;font-size:8.5px;color:#f4f4f4;text-align:center;font-weight:bold;transform:scaleX(0.900);transform-origin:50% 50%;">M</div>
<div class="a" style="left:594.70px;top:444.45px;width:10.10px;height:9.60px;background:#3a393f;border:1.2px solid #a4a4ac"></div>
<div class="a t" style="left:399.75px;top:443.50px;width:400px;height:11.90px;line-height:11.90px;font-size:8.5px;color:#f4f4f4;text-align:center;font-weight:bold;transform:scaleX(0.900);transform-origin:50% 50%;">+</div>
<div class="a" style="left:594.70px;top:456.60px;width:10.10px;height:9.60px;background:#3a393f;border:1.2px solid #a4a4ac"></div>
<div class="a t" style="left:399.75px;top:455.65px;width:400px;height:11.90px;line-height:11.90px;font-size:8.5px;color:#f4f4f4;text-align:center;font-weight:bold;transform:scaleX(0.900);transform-origin:50% 50%;">N</div>
<div class="a" style="left:594.70px;top:468.75px;width:10.10px;height:9.60px;background:#3a393f;border:1.2px solid #a4a4ac"></div>
<div class="a t" style="left:399.75px;top:467.80px;width:400px;height:11.90px;line-height:11.90px;font-size:8.5px;color:#f4f4f4;text-align:center;font-weight:bold;transform:scaleX(0.900);transform-origin:50% 50%;">E</div>
<div class="a" style="left:594.70px;top:480.90px;width:10.10px;height:9.60px;background:#3a393f;border:1.2px solid #a4a4ac"></div>
<div class="a t" style="left:399.75px;top:479.95px;width:400px;height:11.90px;line-height:11.90px;font-size:8.5px;color:#f4f4f4;text-align:center;font-weight:bold;transform:scaleX(0.900);transform-origin:50% 50%;">D</div>
<div class="a" style="left:613.20px;top:392.20px;width:22.90px;height:114.80px;border:1.2px solid #b4b4bc;border-radius:2px"></div>
<div class="a" style="left:619.60px;top:432.30px;width:10.10px;height:9.60px;background:#3a393f;border:1.2px solid #a4a4ac"></div>
<div class="a t" style="left:424.65px;top:431.35px;width:400px;height:11.90px;line-height:11.90px;font-size:8.5px;color:#f4f4f4;text-align:center;font-weight:bold;transform:scaleX(0.900);transform-origin:50% 50%;">M</div>
<div class="a" style="left:619.60px;top:444.45px;width:10.10px;height:9.60px;background:#3a393f;border:1.2px solid #a4a4ac"></div>
<div class="a t" style="left:424.65px;top:443.50px;width:400px;height:11.90px;line-height:11.90px;font-size:8.5px;color:#f4f4f4;text-align:center;font-weight:bold;transform:scaleX(0.900);transform-origin:50% 50%;">E</div>
<div class="a" style="left:619.60px;top:456.60px;width:10.10px;height:9.60px;background:#3a393f;border:1.2px solid #a4a4ac"></div>
<div class="a t" style="left:424.65px;top:455.65px;width:400px;height:11.90px;line-height:11.90px;font-size:8.5px;color:#f4f4f4;text-align:center;font-weight:bold;transform:scaleX(0.900);transform-origin:50% 50%;">D</div>
<div class="a" style="left:619.60px;top:468.75px;width:10.10px;height:9.60px;background:#3a393f;border:1.2px solid #a4a4ac"></div>
<div class="a t" style="left:424.65px;top:467.80px;width:400px;height:11.90px;line-height:11.90px;font-size:8.5px;color:#f4f4f4;text-align:center;font-weight:bold;transform:scaleX(0.900);transform-origin:50% 50%;">C</div>
<div class="a" style="left:619.60px;top:480.90px;width:10.10px;height:9.60px;background:#3a393f;border:1.2px solid #a4a4ac"></div>
<div class="a t" style="left:424.65px;top:479.95px;width:400px;height:11.90px;line-height:11.90px;font-size:8.5px;color:#f4f4f4;text-align:center;font-weight:bold;transform:scaleX(0.900);transform-origin:50% 50%;">L</div>
<div class="a" style="left:619.60px;top:493.05px;width:10.10px;height:9.60px;background:#3a393f;border:1.2px solid #a4a4ac"></div>
<div class="a t" style="left:424.65px;top:492.10px;width:400px;height:11.90px;line-height:11.90px;font-size:8.5px;color:#f4f4f4;text-align:center;font-weight:bold;transform:scaleX(0.900);transform-origin:50% 50%;">+</div>
<div class="a" style="left:640.30px;top:368.00px;width:41.50px;height:142.00px;background:#38363d;border-radius:6px 6px 0 0"></div>
<div class="a" style="left:639.70px;top:366.80px;width:43.40px;height:143.50px;border:1.8px solid #c87a24;border-radius:7px 7px 9px 9px"></div>
<div class="a" style="left:639.70px;top:366.80px;width:43.40px;height:15.20px;background:#f7a01a;border-radius:7px 7px 0 0"></div>
<div class="a t" style="left:461.90px;top:369.45px;width:400px;height:14.70px;line-height:14.70px;font-size:10.5px;color:#fff0c8;text-align:center;transform:scaleX(0.752);transform-origin:50% 50%;">OUT 1</div>
<div class="a" style="left:643.20px;top:388.20px;width:37.40px;height:14.60px;background:#040404;border:1.4px solid #cdcdcd"></div>
<div class="a t" style="left:461.90px;top:388.25px;width:400px;height:14.70px;line-height:14.70px;font-size:10.5px;color:#eeeeee;text-align:center;transform:scaleX(0.808);transform-origin:50% 50%;">0.0</div>
<div class="a" style="left:654.90px;top:408.40px;width:14.00px;height:99.60px;border:1.3px solid #cfcfd2;background:#2c2b31"></div>
<div class="a t" style="left:461.90px;top:408.25px;width:400px;height:11.90px;line-height:11.90px;font-size:8.5px;color:#f4f4f4;text-align:center;font-weight:bold;transform:scaleX(1.058);transform-origin:50% 50%;">6</div>
<div class="a" style="left:654.90px;top:418.90px;width:14.00px;height:1.80px;background:#efefef"></div>
<div class="a" style="left:656.30px;top:425.00px;width:10.80px;height:1.60px;background:#c4c4cc"></div>
<div class="a" style="left:656.30px;top:430.00px;width:10.80px;height:1.60px;background:#c4c4cc"></div>
<div class="a" style="left:654.90px;top:435.00px;width:14.00px;height:2.00px;background:#f0f0f0"></div>
<div class="a" style="left:656.30px;top:440.00px;width:10.80px;height:1.60px;background:#c4c4cc"></div>
<div class="a" style="left:656.30px;top:445.00px;width:10.80px;height:1.60px;background:#c4c4cc"></div>
<div class="a" style="left:656.30px;top:450.00px;width:10.80px;height:1.60px;background:#c4c4cc"></div>
<div class="a" style="left:656.30px;top:455.00px;width:10.80px;height:1.60px;background:#c4c4cc"></div>
<div class="a" style="left:656.30px;top:460.00px;width:10.80px;height:1.60px;background:#c4c4cc"></div>
<div class="a" style="left:656.30px;top:466.00px;width:10.80px;height:1.60px;background:#c4c4cc"></div>
<div class="a" style="left:656.30px;top:471.00px;width:10.80px;height:1.60px;background:#c4c4cc"></div>
<div class="a" style="left:656.30px;top:476.00px;width:10.80px;height:1.60px;background:#c4c4cc"></div>
<div class="a" style="left:656.30px;top:481.00px;width:10.80px;height:1.60px;background:#c4c4cc"></div>
<div class="a" style="left:656.30px;top:486.00px;width:10.80px;height:1.60px;background:#c4c4cc"></div>
<div class="a" style="left:656.30px;top:491.00px;width:10.80px;height:1.60px;background:#c4c4cc"></div>
<div class="a" style="left:656.30px;top:496.00px;width:10.80px;height:1.60px;background:#c4c4cc"></div>
<div class="a" style="left:654.90px;top:496.80px;width:14.00px;height:1.50px;background:#e0e0e0"></div>
<div class="a t" style="left:461.90px;top:496.55px;width:400px;height:11.90px;line-height:11.90px;font-size:8.5px;color:#f4f4f4;text-align:center;font-weight:bold;transform:scaleX(0.895);transform-origin:50% 50%;">-64</div>
<div class="a" style="left:675.20px;top:417.50px;width:2.20px;height:81.00px;background:#f0f2f4"></div>
<div class="a" style="left:670.30px;top:423.70px;width:11.00px;height:15.30px;background:#f5861c;border-radius:1.5px"></div>
<div class="a" style="left:670.30px;top:426.20px;width:11.00px;height:3.20px;background:linear-gradient(#fcd2a8,#fff2e4,#fcd2a8)"></div>
<div class="a" style="left:670.30px;top:432.60px;width:11.00px;height:3.50px;background:linear-gradient(#fcd2a8,#fff2e4,#fcd2a8)"></div>
<div class="a" style="left:643.10px;top:433.30px;width:10.10px;height:9.60px;background:#3a393f;border:1.2px solid #a4a4ac"></div>
<div class="a t" style="left:448.15px;top:432.35px;width:400px;height:11.90px;line-height:11.90px;font-size:8.5px;color:#f4f4f4;text-align:center;font-weight:bold;transform:scaleX(0.900);transform-origin:50% 50%;">M</div>
<div class="a" style="left:643.10px;top:445.45px;width:10.10px;height:9.60px;background:#3a393f;border:1.2px solid #a4a4ac"></div>
<div class="a t" style="left:448.15px;top:444.50px;width:400px;height:11.90px;line-height:11.90px;font-size:8.5px;color:#f4f4f4;text-align:center;font-weight:bold;transform:scaleX(0.900);transform-origin:50% 50%;">E</div>
<div class="a" style="left:643.10px;top:457.60px;width:10.10px;height:9.60px;background:#3a393f;border:1.2px solid #a4a4ac"></div>
<div class="a t" style="left:448.15px;top:456.65px;width:400px;height:11.90px;line-height:11.90px;font-size:8.5px;color:#f4f4f4;text-align:center;font-weight:bold;transform:scaleX(0.900);transform-origin:50% 50%;">D</div>
<div class="a" style="left:642.80px;top:468.95px;width:10.70px;height:11.20px;background:#f07818"></div>
<div class="a t" style="left:448.15px;top:468.80px;width:400px;height:11.90px;line-height:11.90px;font-size:8.5px;color:#4a1c00;text-align:center;font-weight:bold;transform:scaleX(0.900);transform-origin:50% 50%;">C</div>
<div class="a" style="left:642.80px;top:481.10px;width:10.70px;height:11.20px;background:#f07818"></div>
<div class="a t" style="left:448.15px;top:480.95px;width:400px;height:11.90px;line-height:11.90px;font-size:8.5px;color:#4a1c00;text-align:center;font-weight:bold;transform:scaleX(0.900);transform-origin:50% 50%;">L</div>
<div class="a" style="left:643.10px;top:494.05px;width:10.10px;height:9.60px;background:#3a393f;border:1.2px solid #a4a4ac"></div>
<div class="a t" style="left:448.15px;top:493.10px;width:400px;height:11.90px;line-height:11.90px;font-size:8.5px;color:#f4f4f4;text-align:center;font-weight:bold;transform:scaleX(0.900);transform-origin:50% 50%;">+</div>
<div class="a" style="left:688.90px;top:368.00px;width:41.50px;height:142.00px;background:#38363d;border-radius:6px 6px 0 0"></div>
<div class="a" style="left:689.90px;top:368.00px;width:41.20px;height:14.10px;background:#f7a01a;border-radius:6px 6px 0 0"></div>
<div class="a t" style="left:510.50px;top:369.45px;width:400px;height:14.70px;line-height:14.70px;font-size:10.5px;color:#fff0c8;text-align:center;transform:scaleX(0.752);transform-origin:50% 50%;">OUT 2</div>
<div class="a" style="left:691.80px;top:388.20px;width:37.40px;height:14.60px;background:#040404;border:1.4px solid #cdcdcd"></div>
<div class="a t" style="left:510.50px;top:388.25px;width:400px;height:14.70px;line-height:14.70px;font-size:10.5px;color:#eeeeee;text-align:center;transform:scaleX(0.808);transform-origin:50% 50%;">0.0</div>
<div class="a" style="left:703.50px;top:408.40px;width:14.00px;height:99.60px;border:1.3px solid #cfcfd2;background:#2c2b31"></div>
<div class="a t" style="left:510.50px;top:408.25px;width:400px;height:11.90px;line-height:11.90px;font-size:8.5px;color:#f4f4f4;text-align:center;font-weight:bold;transform:scaleX(1.058);transform-origin:50% 50%;">6</div>
<div class="a" style="left:703.50px;top:418.90px;width:14.00px;height:1.80px;background:#efefef"></div>
<div class="a" style="left:704.90px;top:425.00px;width:10.80px;height:1.60px;background:#c4c4cc"></div>
<div class="a" style="left:704.90px;top:430.00px;width:10.80px;height:1.60px;background:#c4c4cc"></div>
<div class="a" style="left:703.50px;top:435.00px;width:14.00px;height:2.00px;background:#f0f0f0"></div>
<div class="a" style="left:704.90px;top:440.00px;width:10.80px;height:1.60px;background:#c4c4cc"></div>
<div class="a" style="left:704.90px;top:445.00px;width:10.80px;height:1.60px;background:#c4c4cc"></div>
<div class="a" style="left:704.90px;top:450.00px;width:10.80px;height:1.60px;background:#c4c4cc"></div>
<div class="a" style="left:704.90px;top:455.00px;width:10.80px;height:1.60px;background:#c4c4cc"></div>
<div class="a" style="left:704.90px;top:460.00px;width:10.80px;height:1.60px;background:#c4c4cc"></div>
<div class="a" style="left:704.90px;top:466.00px;width:10.80px;height:1.60px;background:#c4c4cc"></div>
<div class="a" style="left:704.90px;top:471.00px;width:10.80px;height:1.60px;background:#c4c4cc"></div>
<div class="a" style="left:704.90px;top:476.00px;width:10.80px;height:1.60px;background:#c4c4cc"></div>
<div class="a" style="left:704.90px;top:481.00px;width:10.80px;height:1.60px;background:#c4c4cc"></div>
<div class="a" style="left:704.90px;top:486.00px;width:10.80px;height:1.60px;background:#c4c4cc"></div>
<div class="a" style="left:704.90px;top:491.00px;width:10.80px;height:1.60px;background:#c4c4cc"></div>
<div class="a" style="left:704.90px;top:496.00px;width:10.80px;height:1.60px;background:#c4c4cc"></div>
<div class="a" style="left:703.50px;top:496.80px;width:14.00px;height:1.50px;background:#e0e0e0"></div>
<div class="a t" style="left:510.50px;top:496.55px;width:400px;height:11.90px;line-height:11.90px;font-size:8.5px;color:#f4f4f4;text-align:center;font-weight:bold;transform:scaleX(0.895);transform-origin:50% 50%;">-64</div>
<div class="a" style="left:723.80px;top:417.50px;width:2.20px;height:81.00px;background:#f0f2f4"></div>
<div class="a" style="left:718.90px;top:423.70px;width:11.00px;height:15.30px;background:#f5861c;border-radius:1.5px"></div>
<div class="a" style="left:718.90px;top:426.20px;width:11.00px;height:3.20px;background:linear-gradient(#fcd2a8,#fff2e4,#fcd2a8)"></div>
<div class="a" style="left:718.90px;top:432.60px;width:11.00px;height:3.50px;background:linear-gradient(#fcd2a8,#fff2e4,#fcd2a8)"></div>
<div class="a" style="left:691.70px;top:433.30px;width:10.10px;height:9.60px;background:#3a393f;border:1.2px solid #a4a4ac"></div>
<div class="a t" style="left:496.75px;top:432.35px;width:400px;height:11.90px;line-height:11.90px;font-size:8.5px;color:#f4f4f4;text-align:center;font-weight:bold;transform:scaleX(0.900);transform-origin:50% 50%;">M</div>
<div class="a" style="left:691.70px;top:445.45px;width:10.10px;height:9.60px;background:#3a393f;border:1.2px solid #a4a4ac"></div>
<div class="a t" style="left:496.75px;top:444.50px;width:400px;height:11.90px;line-height:11.90px;font-size:8.5px;color:#f4f4f4;text-align:center;font-weight:bold;transform:scaleX(0.900);transform-origin:50% 50%;">E</div>
<div class="a" style="left:691.70px;top:457.60px;width:10.10px;height:9.60px;background:#3a393f;border:1.2px solid #a4a4ac"></div>
<div class="a t" style="left:496.75px;top:456.65px;width:400px;height:11.90px;line-height:11.90px;font-size:8.5px;color:#f4f4f4;text-align:center;font-weight:bold;transform:scaleX(0.900);transform-origin:50% 50%;">D</div>
<div class="a" style="left:691.70px;top:469.75px;width:10.10px;height:9.60px;background:#3a393f;border:1.2px solid #a4a4ac"></div>
<div class="a t" style="left:496.75px;top:468.80px;width:400px;height:11.90px;line-height:11.90px;font-size:8.5px;color:#f4f4f4;text-align:center;font-weight:bold;transform:scaleX(0.900);transform-origin:50% 50%;">C</div>
<div class="a" style="left:691.70px;top:481.90px;width:10.10px;height:9.60px;background:#3a393f;border:1.2px solid #a4a4ac"></div>
<div class="a t" style="left:496.75px;top:480.95px;width:400px;height:11.90px;line-height:11.90px;font-size:8.5px;color:#f4f4f4;text-align:center;font-weight:bold;transform:scaleX(0.900);transform-origin:50% 50%;">L</div>
<div class="a" style="left:691.70px;top:494.05px;width:10.10px;height:9.60px;background:#3a393f;border:1.2px solid #a4a4ac"></div>
<div class="a t" style="left:496.75px;top:493.10px;width:400px;height:11.90px;line-height:11.90px;font-size:8.5px;color:#f4f4f4;text-align:center;font-weight:bold;transform:scaleX(0.900);transform-origin:50% 50%;">+</div>
<div class="a" style="left:737.70px;top:368.00px;width:41.50px;height:142.00px;background:#38363d;border-radius:6px 6px 0 0"></div>
<div class="a" style="left:738.70px;top:368.00px;width:41.20px;height:14.10px;background:#f7a01a;border-radius:6px 6px 0 0"></div>
<div class="a t" style="left:559.30px;top:369.45px;width:400px;height:14.70px;line-height:14.70px;font-size:10.5px;color:#fff0c8;text-align:center;transform:scaleX(0.752);transform-origin:50% 50%;">OUT 3</div>
<div class="a" style="left:740.60px;top:388.20px;width:37.40px;height:14.60px;background:#040404;border:1.4px solid #cdcdcd"></div>
<div class="a t" style="left:559.30px;top:388.25px;width:400px;height:14.70px;line-height:14.70px;font-size:10.5px;color:#eeeeee;text-align:center;transform:scaleX(0.808);transform-origin:50% 50%;">0.0</div>
<div class="a" style="left:752.30px;top:408.40px;width:14.00px;height:99.60px;border:1.3px solid #cfcfd2;background:#2c2b31"></div>
<div class="a t" style="left:559.30px;top:408.25px;width:400px;height:11.90px;line-height:11.90px;font-size:8.5px;color:#f4f4f4;text-align:center;font-weight:bold;transform:scaleX(1.058);transform-origin:50% 50%;">6</div>
<div class="a" style="left:752.30px;top:418.90px;width:14.00px;height:1.80px;background:#efefef"></div>
<div class="a" style="left:753.70px;top:425.00px;width:10.80px;height:1.60px;background:#c4c4cc"></div>
<div class="a" style="left:753.70px;top:430.00px;width:10.80px;height:1.60px;background:#c4c4cc"></div>
<div class="a" style="left:752.30px;top:435.00px;width:14.00px;height:2.00px;background:#f0f0f0"></div>
<div class="a" style="left:753.70px;top:440.00px;width:10.80px;height:1.60px;background:#c4c4cc"></div>
<div class="a" style="left:753.70px;top:445.00px;width:10.80px;height:1.60px;background:#c4c4cc"></div>
<div class="a" style="left:753.70px;top:450.00px;width:10.80px;height:1.60px;background:#c4c4cc"></div>
<div class="a" style="left:753.70px;top:455.00px;width:10.80px;height:1.60px;background:#c4c4cc"></div>
<div class="a" style="left:753.70px;top:460.00px;width:10.80px;height:1.60px;background:#c4c4cc"></div>
<div class="a" style="left:753.70px;top:466.00px;width:10.80px;height:1.60px;background:#c4c4cc"></div>
<div class="a" style="left:753.70px;top:471.00px;width:10.80px;height:1.60px;background:#c4c4cc"></div>
<div class="a" style="left:753.70px;top:476.00px;width:10.80px;height:1.60px;background:#c4c4cc"></div>
<div class="a" style="left:753.70px;top:481.00px;width:10.80px;height:1.60px;background:#c4c4cc"></div>
<div class="a" style="left:753.70px;top:486.00px;width:10.80px;height:1.60px;background:#c4c4cc"></div>
<div class="a" style="left:753.70px;top:491.00px;width:10.80px;height:1.60px;background:#c4c4cc"></div>
<div class="a" style="left:753.70px;top:496.00px;width:10.80px;height:1.60px;background:#c4c4cc"></div>
<div class="a" style="left:752.30px;top:496.80px;width:14.00px;height:1.50px;background:#e0e0e0"></div>
<div class="a t" style="left:559.30px;top:496.55px;width:400px;height:11.90px;line-height:11.90px;font-size:8.5px;color:#f4f4f4;text-align:center;font-weight:bold;transform:scaleX(0.895);transform-origin:50% 50%;">-64</div>
<div class="a" style="left:772.60px;top:417.50px;width:2.20px;height:81.00px;background:#f0f2f4"></div>
<div class="a" style="left:767.70px;top:423.70px;width:11.00px;height:15.30px;background:#f5861c;border-radius:1.5px"></div>
<div class="a" style="left:767.70px;top:426.20px;width:11.00px;height:3.20px;background:linear-gradient(#fcd2a8,#fff2e4,#fcd2a8)"></div>
<div class="a" style="left:767.70px;top:432.60px;width:11.00px;height:3.50px;background:linear-gradient(#fcd2a8,#fff2e4,#fcd2a8)"></div>
<div class="a" style="left:740.50px;top:433.30px;width:10.10px;height:9.60px;background:#3a393f;border:1.2px solid #a4a4ac"></div>
<div class="a t" style="left:545.55px;top:432.35px;width:400px;height:11.90px;line-height:11.90px;font-size:8.5px;color:#f4f4f4;text-align:center;font-weight:bold;transform:scaleX(0.900);transform-origin:50% 50%;">M</div>
<div class="a" style="left:740.50px;top:445.45px;width:10.10px;height:9.60px;background:#3a393f;border:1.2px solid #a4a4ac"></div>
<div class="a t" style="left:545.55px;top:444.50px;width:400px;height:11.90px;line-height:11.90px;font-size:8.5px;color:#f4f4f4;text-align:center;font-weight:bold;transform:scaleX(0.900);transform-origin:50% 50%;">E</div>
<div class="a" style="left:740.50px;top:457.60px;width:10.10px;height:9.60px;background:#3a393f;border:1.2px solid #a4a4ac"></div>
<div class="a t" style="left:545.55px;top:456.65px;width:400px;height:11.90px;line-height:11.90px;font-size:8.5px;color:#f4f4f4;text-align:center;font-weight:bold;transform:scaleX(0.900);transform-origin:50% 50%;">D</div>
<div class="a" style="left:740.50px;top:469.75px;width:10.10px;height:9.60px;background:#3a393f;border:1.2px solid #a4a4ac"></div>
<div class="a t" style="left:545.55px;top:468.80px;width:400px;height:11.90px;line-height:11.90px;font-size:8.5px;color:#f4f4f4;text-align:center;font-weight:bold;transform:scaleX(0.900);transform-origin:50% 50%;">C</div>
<div class="a" style="left:740.50px;top:481.90px;width:10.10px;height:9.60px;background:#3a393f;border:1.2px solid #a4a4ac"></div>
<div class="a t" style="left:545.55px;top:480.95px;width:400px;height:11.90px;line-height:11.90px;font-size:8.5px;color:#f4f4f4;text-align:center;font-weight:bold;transform:scaleX(0.900);transform-origin:50% 50%;">L</div>
<div class="a" style="left:740.50px;top:494.05px;width:10.10px;height:9.60px;background:#3a393f;border:1.2px solid #a4a4ac"></div>
<div class="a t" style="left:545.55px;top:493.10px;width:400px;height:11.90px;line-height:11.90px;font-size:8.5px;color:#f4f4f4;text-align:center;font-weight:bold;transform:scaleX(0.900);transform-origin:50% 50%;">+</div>
<div class="a" style="left:786.50px;top:368.00px;width:41.50px;height:142.00px;background:#38363d;border-radius:6px 6px 0 0"></div>
<div class="a" style="left:787.50px;top:368.00px;width:41.20px;height:14.10px;background:#f7a01a;border-radius:6px 6px 0 0"></div>
<div class="a t" style="left:608.10px;top:369.45px;width:400px;height:14.70px;line-height:14.70px;font-size:10.5px;color:#fff0c8;text-align:center;transform:scaleX(0.752);transform-origin:50% 50%;">OUT 4</div>
<div class="a" style="left:789.40px;top:388.20px;width:37.40px;height:14.60px;background:#040404;border:1.4px solid #cdcdcd"></div>
<div class="a t" style="left:608.10px;top:388.25px;width:400px;height:14.70px;line-height:14.70px;font-size:10.5px;color:#eeeeee;text-align:center;transform:scaleX(0.808);transform-origin:50% 50%;">0.0</div>
<div class="a" style="left:801.10px;top:408.40px;width:14.00px;height:99.60px;border:1.3px solid #cfcfd2;background:#2c2b31"></div>
<div class="a t" style="left:608.10px;top:408.25px;width:400px;height:11.90px;line-height:11.90px;font-size:8.5px;color:#f4f4f4;text-align:center;font-weight:bold;transform:scaleX(1.058);transform-origin:50% 50%;">6</div>
<div class="a" style="left:801.10px;top:418.90px;width:14.00px;height:1.80px;background:#efefef"></div>
<div class="a" style="left:802.50px;top:425.00px;width:10.80px;height:1.60px;background:#c4c4cc"></div>
<div class="a" style="left:802.50px;top:430.00px;width:10.80px;height:1.60px;background:#c4c4cc"></div>
<div class="a" style="left:801.10px;top:435.00px;width:14.00px;height:2.00px;background:#f0f0f0"></div>
<div class="a" style="left:802.50px;top:440.00px;width:10.80px;height:1.60px;background:#c4c4cc"></div>
<div class="a" style="left:802.50px;top:445.00px;width:10.80px;height:1.60px;background:#c4c4cc"></div>
<div class="a" style="left:802.50px;top:450.00px;width:10.80px;height:1.60px;background:#c4c4cc"></div>
<div class="a" style="left:802.50px;top:455.00px;width:10.80px;height:1.60px;background:#c4c4cc"></div>
<div class="a" style="left:802.50px;top:460.00px;width:10.80px;height:1.60px;background:#c4c4cc"></div>
<div class="a" style="left:802.50px;top:466.00px;width:10.80px;height:1.60px;background:#c4c4cc"></div>
<div class="a" style="left:802.50px;top:471.00px;width:10.80px;height:1.60px;background:#c4c4cc"></div>
<div class="a" style="left:802.50px;top:476.00px;width:10.80px;height:1.60px;background:#c4c4cc"></div>
<div class="a" style="left:802.50px;top:481.00px;width:10.80px;height:1.60px;background:#c4c4cc"></div>
<div class="a" style="left:802.50px;top:486.00px;width:10.80px;height:1.60px;background:#c4c4cc"></div>
<div class="a" style="left:802.50px;top:491.00px;width:10.80px;height:1.60px;background:#c4c4cc"></div>
<div class="a" style="left:802.50px;top:496.00px;width:10.80px;height:1.60px;background:#c4c4cc"></div>
<div class="a" style="left:801.10px;top:496.80px;width:14.00px;height:1.50px;background:#e0e0e0"></div>
<div class="a t" style="left:608.10px;top:496.55px;width:400px;height:11.90px;line-height:11.90px;font-size:8.5px;color:#f4f4f4;text-align:center;font-weight:bold;transform:scaleX(0.895);transform-origin:50% 50%;">-64</div>
<div class="a" style="left:821.40px;top:417.50px;width:2.20px;height:81.00px;background:#f0f2f4"></div>
<div class="a" style="left:816.50px;top:423.70px;width:11.00px;height:15.30px;background:#f5861c;border-radius:1.5px"></div>
<div class="a" style="left:816.50px;top:426.20px;width:11.00px;height:3.20px;background:linear-gradient(#fcd2a8,#fff2e4,#fcd2a8)"></div>
<div class="a" style="left:816.50px;top:432.60px;width:11.00px;height:3.50px;background:linear-gradient(#fcd2a8,#fff2e4,#fcd2a8)"></div>
<div class="a" style="left:789.30px;top:433.30px;width:10.10px;height:9.60px;background:#3a393f;border:1.2px solid #a4a4ac"></div>
<div class="a t" style="left:594.35px;top:432.35px;width:400px;height:11.90px;line-height:11.90px;font-size:8.5px;color:#f4f4f4;text-align:center;font-weight:bold;transform:scaleX(0.900);transform-origin:50% 50%;">M</div>
<div class="a" style="left:789.30px;top:445.45px;width:10.10px;height:9.60px;background:#3a393f;border:1.2px solid #a4a4ac"></div>
<div class="a t" style="left:594.35px;top:444.50px;width:400px;height:11.90px;line-height:11.90px;font-size:8.5px;color:#f4f4f4;text-align:center;font-weight:bold;transform:scaleX(0.900);transform-origin:50% 50%;">E</div>
<div class="a" style="left:789.30px;top:457.60px;width:10.10px;height:9.60px;background:#3a393f;border:1.2px solid #a4a4ac"></div>
<div class="a t" style="left:594.35px;top:456.65px;width:400px;height:11.90px;line-height:11.90px;font-size:8.5px;color:#f4f4f4;text-align:center;font-weight:bold;transform:scaleX(0.900);transform-origin:50% 50%;">D</div>
<div class="a" style="left:789.30px;top:469.75px;width:10.10px;height:9.60px;background:#3a393f;border:1.2px solid #a4a4ac"></div>
<div class="a t" style="left:594.35px;top:468.80px;width:400px;height:11.90px;line-height:11.90px;font-size:8.5px;color:#f4f4f4;text-align:center;font-weight:bold;transform:scaleX(0.900);transform-origin:50% 50%;">C</div>
<div class="a" style="left:789.30px;top:481.90px;width:10.10px;height:9.60px;background:#3a393f;border:1.2px solid #a4a4ac"></div>
<div class="a t" style="left:594.35px;top:480.95px;width:400px;height:11.90px;line-height:11.90px;font-size:8.5px;color:#f4f4f4;text-align:center;font-weight:bold;transform:scaleX(0.900);transform-origin:50% 50%;">L</div>
<div class="a" style="left:789.30px;top:494.05px;width:10.10px;height:9.60px;background:#3a393f;border:1.2px solid #a4a4ac"></div>
<div class="a t" style="left:594.35px;top:493.10px;width:400px;height:11.90px;line-height:11.90px;font-size:8.5px;color:#f4f4f4;text-align:center;font-weight:bold;transform:scaleX(0.900);transform-origin:50% 50%;">+</div>
<div class="a" style="left:835.30px;top:368.00px;width:41.50px;height:142.00px;background:#38363d;border-radius:6px 6px 0 0"></div>
<div class="a" style="left:836.30px;top:368.00px;width:41.20px;height:14.10px;background:#f7a01a;border-radius:6px 6px 0 0"></div>
<div class="a t" style="left:656.90px;top:369.45px;width:400px;height:14.70px;line-height:14.70px;font-size:10.5px;color:#fff0c8;text-align:center;transform:scaleX(0.752);transform-origin:50% 50%;">OUT 5</div>
<div class="a" style="left:838.20px;top:388.20px;width:37.40px;height:14.60px;background:#040404;border:1.4px solid #cdcdcd"></div>
<div class="a t" style="left:656.90px;top:388.25px;width:400px;height:14.70px;line-height:14.70px;font-size:10.5px;color:#eeeeee;text-align:center;transform:scaleX(0.808);transform-origin:50% 50%;">0.0</div>
<div class="a" style="left:849.90px;top:408.40px;width:14.00px;height:99.60px;border:1.3px solid #cfcfd2;background:#2c2b31"></div>
<div class="a t" style="left:656.90px;top:408.25px;width:400px;height:11.90px;line-height:11.90px;font-size:8.5px;color:#f4f4f4;text-align:center;font-weight:bold;transform:scaleX(1.058);transform-origin:50% 50%;">6</div>
<div class="a" style="left:849.90px;top:418.90px;width:14.00px;height:1.80px;background:#efefef"></div>
<div class="a" style="left:851.30px;top:425.00px;width:10.80px;height:1.60px;background:#c4c4cc"></div>
<div class="a" style="left:851.30px;top:430.00px;width:10.80px;height:1.60px;background:#c4c4cc"></div>
<div class="a" style="left:849.90px;top:435.00px;width:14.00px;height:2.00px;background:#f0f0f0"></div>
<div class="a" style="left:851.30px;top:440.00px;width:10.80px;height:1.60px;background:#c4c4cc"></div>
<div class="a" style="left:851.30px;top:445.00px;width:10.80px;height:1.60px;background:#c4c4cc"></div>
<div class="a" style="left:851.30px;top:450.00px;width:10.80px;height:1.60px;background:#c4c4cc"></div>
<div class="a" style="left:851.30px;top:455.00px;width:10.80px;height:1.60px;background:#c4c4cc"></div>
<div class="a" style="left:851.30px;top:460.00px;width:10.80px;height:1.60px;background:#c4c4cc"></div>
<div class="a" style="left:851.30px;top:466.00px;width:10.80px;height:1.60px;background:#c4c4cc"></div>
<div class="a" style="left:851.30px;top:471.00px;width:10.80px;height:1.60px;background:#c4c4cc"></div>
<div class="a" style="left:851.30px;top:476.00px;width:10.80px;height:1.60px;background:#c4c4cc"></div>
<div class="a" style="left:851.30px;top:481.00px;width:10.80px;height:1.60px;background:#c4c4cc"></div>
<div class="a" style="left:851.30px;top:486.00px;width:10.80px;height:1.60px;background:#c4c4cc"></div>
<div class="a" style="left:851.30px;top:491.00px;width:10.80px;height:1.60px;background:#c4c4cc"></div>
<div class="a" style="left:851.30px;top:496.00px;width:10.80px;height:1.60px;background:#c4c4cc"></div>
<div class="a" style="left:849.90px;top:496.80px;width:14.00px;height:1.50px;background:#e0e0e0"></div>
<div class="a t" style="left:656.90px;top:496.55px;width:400px;height:11.90px;line-height:11.90px;font-size:8.5px;color:#f4f4f4;text-align:center;font-weight:bold;transform:scaleX(0.895);transform-origin:50% 50%;">-64</div>
<div class="a" style="left:870.20px;top:417.50px;width:2.20px;height:81.00px;background:#f0f2f4"></div>
<div class="a" style="left:865.30px;top:423.70px;width:11.00px;height:15.30px;background:#f5861c;border-radius:1.5px"></div>
<div class="a" style="left:865.30px;top:426.20px;width:11.00px;height:3.20px;background:linear-gradient(#fcd2a8,#fff2e4,#fcd2a8)"></div>
<div class="a" style="left:865.30px;top:432.60px;width:11.00px;height:3.50px;background:linear-gradient(#fcd2a8,#fff2e4,#fcd2a8)"></div>
<div class="a" style="left:838.10px;top:433.30px;width:10.10px;height:9.60px;background:#3a393f;border:1.2px solid #a4a4ac"></div>
<div class="a t" style="left:643.15px;top:432.35px;width:400px;height:11.90px;line-height:11.90px;font-size:8.5px;color:#f4f4f4;text-align:center;font-weight:bold;transform:scaleX(0.900);transform-origin:50% 50%;">M</div>
<div class="a" style="left:838.10px;top:445.45px;width:10.10px;height:9.60px;background:#3a393f;border:1.2px solid #a4a4ac"></div>
<div class="a t" style="left:643.15px;top:444.50px;width:400px;height:11.90px;line-height:11.90px;font-size:8.5px;color:#f4f4f4;text-align:center;font-weight:bold;transform:scaleX(0.900);transform-origin:50% 50%;">E</div>
<div class="a" style="left:838.10px;top:457.60px;width:10.10px;height:9.60px;background:#3a393f;border:1.2px solid #a4a4ac"></div>
<div class="a t" style="left:643.15px;top:456.65px;width:400px;height:11.90px;line-height:11.90px;font-size:8.5px;color:#f4f4f4;text-align:center;font-weight:bold;transform:scaleX(0.900);transform-origin:50% 50%;">D</div>
<div class="a" style="left:838.10px;top:469.75px;width:10.10px;height:9.60px;background:#3a393f;border:1.2px solid #a4a4ac"></div>
<div class="a t" style="left:643.15px;top:468.80px;width:400px;height:11.90px;line-height:11.90px;font-size:8.5px;color:#f4f4f4;text-align:center;font-weight:bold;transform:scaleX(0.900);transform-origin:50% 50%;">C</div>
<div class="a" style="left:838.10px;top:481.90px;width:10.10px;height:9.60px;background:#3a393f;border:1.2px solid #a4a4ac"></div>
<div class="a t" style="left:643.15px;top:480.95px;width:400px;height:11.90px;line-height:11.90px;font-size:8.5px;color:#f4f4f4;text-align:center;font-weight:bold;transform:scaleX(0.900);transform-origin:50% 50%;">L</div>
<div class="a" style="left:838.10px;top:494.05px;width:10.10px;height:9.60px;background:#3a393f;border:1.2px solid #a4a4ac"></div>
<div class="a t" style="left:643.15px;top:493.10px;width:400px;height:11.90px;line-height:11.90px;font-size:8.5px;color:#f4f4f4;text-align:center;font-weight:bold;transform:scaleX(0.900);transform-origin:50% 50%;">+</div>
<div class="a" style="left:884.10px;top:368.00px;width:41.50px;height:142.00px;background:#38363d;border-radius:6px 6px 0 0"></div>
<div class="a" style="left:885.10px;top:368.00px;width:41.20px;height:14.10px;background:#f7a01a;border-radius:6px 6px 0 0"></div>
<div class="a t" style="left:705.70px;top:369.45px;width:400px;height:14.70px;line-height:14.70px;font-size:10.5px;color:#fff0c8;text-align:center;transform:scaleX(0.752);transform-origin:50% 50%;">OUT 6</div>
<div class="a" style="left:887.00px;top:388.20px;width:37.40px;height:14.60px;background:#040404;border:1.4px solid #cdcdcd"></div>
<div class="a t" style="left:705.70px;top:388.25px;width:400px;height:14.70px;line-height:14.70px;font-size:10.5px;color:#eeeeee;text-align:center;transform:scaleX(0.808);transform-origin:50% 50%;">0.0</div>
<div class="a" style="left:898.70px;top:408.40px;width:14.00px;height:99.60px;border:1.3px solid #cfcfd2;background:#2c2b31"></div>
<div class="a t" style="left:705.70px;top:408.25px;width:400px;height:11.90px;line-height:11.90px;font-size:8.5px;color:#f4f4f4;text-align:center;font-weight:bold;transform:scaleX(1.058);transform-origin:50% 50%;">6</div>
<div class="a" style="left:898.70px;top:418.90px;width:14.00px;height:1.80px;background:#efefef"></div>
<div class="a" style="left:900.10px;top:425.00px;width:10.80px;height:1.60px;background:#c4c4cc"></div>
<div class="a" style="left:900.10px;top:430.00px;width:10.80px;height:1.60px;background:#c4c4cc"></div>
<div class="a" style="left:898.70px;top:435.00px;width:14.00px;height:2.00px;background:#f0f0f0"></div>
<div class="a" style="left:900.10px;top:440.00px;width:10.80px;height:1.60px;background:#c4c4cc"></div>
<div class="a" style="left:900.10px;top:445.00px;width:10.80px;height:1.60px;background:#c4c4cc"></div>
<div class="a" style="left:900.10px;top:450.00px;width:10.80px;height:1.60px;background:#c4c4cc"></div>
<div class="a" style="left:900.10px;top:455.00px;width:10.80px;height:1.60px;background:#c4c4cc"></div>
<div class="a" style="left:900.10px;top:460.00px;width:10.80px;height:1.60px;background:#c4c4cc"></div>
<div class="a" style="left:900.10px;top:466.00px;width:10.80px;height:1.60px;background:#c4c4cc"></div>
<div class="a" style="left:900.10px;top:471.00px;width:10.80px;height:1.60px;background:#c4c4cc"></div>
<div class="a" style="left:900.10px;top:476.00px;width:10.80px;height:1.60px;background:#c4c4cc"></div>
<div class="a" style="left:900.10px;top:481.00px;width:10.80px;height:1.60px;background:#c4c4cc"></div>
<div class="a" style="left:900.10px;top:486.00px;width:10.80px;height:1.60px;background:#c4c4cc"></div>
<div class="a" style="left:900.10px;top:491.00px;width:10.80px;height:1.60px;background:#c4c4cc"></div>
<div class="a" style="left:900.10px;top:496.00px;width:10.80px;height:1.60px;background:#c4c4cc"></div>
<div class="a" style="left:898.70px;top:496.80px;width:14.00px;height:1.50px;background:#e0e0e0"></div>
<div class="a t" style="left:705.70px;top:496.55px;width:400px;height:11.90px;line-height:11.90px;font-size:8.5px;color:#f4f4f4;text-align:center;font-weight:bold;transform:scaleX(0.895);transform-origin:50% 50%;">-64</div>
<div class="a" style="left:919.00px;top:417.50px;width:2.20px;height:81.00px;background:#f0f2f4"></div>
<div class="a" style="left:914.10px;top:423.70px;width:11.00px;height:15.30px;background:#f5861c;border-radius:1.5px"></div>
<div class="a" style="left:914.10px;top:426.20px;width:11.00px;height:3.20px;background:linear-gradient(#fcd2a8,#fff2e4,#fcd2a8)"></div>
<div class="a" style="left:914.10px;top:432.60px;width:11.00px;height:3.50px;background:linear-gradient(#fcd2a8,#fff2e4,#fcd2a8)"></div>
<div class="a" style="left:886.90px;top:433.30px;width:10.10px;height:9.60px;background:#3a393f;border:1.2px solid #a4a4ac"></div>
<div class="a t" style="left:691.95px;top:432.35px;width:400px;height:11.90px;line-height:11.90px;font-size:8.5px;color:#f4f4f4;text-align:center;font-weight:bold;transform:scaleX(0.900);transform-origin:50% 50%;">M</div>
<div class="a" style="left:886.90px;top:445.45px;width:10.10px;height:9.60px;background:#3a393f;border:1.2px solid #a4a4ac"></div>
<div class="a t" style="left:691.95px;top:444.50px;width:400px;height:11.90px;line-height:11.90px;font-size:8.5px;color:#f4f4f4;text-align:center;font-weight:bold;transform:scaleX(0.900);transform-origin:50% 50%;">E</div>
<div class="a" style="left:886.90px;top:457.60px;width:10.10px;height:9.60px;background:#3a393f;border:1.2px solid #a4a4ac"></div>
<div class="a t" style="left:691.95px;top:456.65px;width:400px;height:11.90px;line-height:11.90px;font-size:8.5px;color:#f4f4f4;text-align:center;font-weight:bold;transform:scaleX(0.900);transform-origin:50% 50%;">D</div>
<div class="a" style="left:886.90px;top:469.75px;width:10.10px;height:9.60px;background:#3a393f;border:1.2px solid #a4a4ac"></div>
<div class="a t" style="left:691.95px;top:468.80px;width:400px;height:11.90px;line-height:11.90px;font-size:8.5px;color:#f4f4f4;text-align:center;font-weight:bold;transform:scaleX(0.900);transform-origin:50% 50%;">C</div>
<div class="a" style="left:886.90px;top:481.90px;width:10.10px;height:9.60px;background:#3a393f;border:1.2px solid #a4a4ac"></div>
<div class="a t" style="left:691.95px;top:480.95px;width:400px;height:11.90px;line-height:11.90px;font-size:8.5px;color:#f4f4f4;text-align:center;font-weight:bold;transform:scaleX(0.900);transform-origin:50% 50%;">L</div>
<div class="a" style="left:886.90px;top:494.05px;width:10.10px;height:9.60px;background:#3a393f;border:1.2px solid #a4a4ac"></div>
<div class="a t" style="left:691.95px;top:493.10px;width:400px;height:11.90px;line-height:11.90px;font-size:8.5px;color:#f4f4f4;text-align:center;font-weight:bold;transform:scaleX(0.900);transform-origin:50% 50%;">+</div>
<div class="a" style="left:932.90px;top:368.00px;width:41.50px;height:142.00px;background:#38363d;border-radius:6px 6px 0 0"></div>
<div class="a" style="left:933.90px;top:368.00px;width:41.20px;height:14.10px;background:#f7a01a;border-radius:6px 6px 0 0"></div>
<div class="a t" style="left:754.50px;top:369.45px;width:400px;height:14.70px;line-height:14.70px;font-size:10.5px;color:#fff0c8;text-align:center;transform:scaleX(0.752);transform-origin:50% 50%;">OUT 7</div>
<div class="a" style="left:935.80px;top:388.20px;width:37.40px;height:14.60px;background:#040404;border:1.4px solid #cdcdcd"></div>
<div class="a t" style="left:754.50px;top:388.25px;width:400px;height:14.70px;line-height:14.70px;font-size:10.5px;color:#eeeeee;text-align:center;transform:scaleX(0.808);transform-origin:50% 50%;">0.0</div>
<div class="a" style="left:947.50px;top:408.40px;width:14.00px;height:99.60px;border:1.3px solid #cfcfd2;background:#2c2b31"></div>
<div class="a t" style="left:754.50px;top:408.25px;width:400px;height:11.90px;line-height:11.90px;font-size:8.5px;color:#f4f4f4;text-align:center;font-weight:bold;transform:scaleX(1.058);transform-origin:50% 50%;">6</div>
<div class="a" style="left:947.50px;top:418.90px;width:14.00px;height:1.80px;background:#efefef"></div>
<div class="a" style="left:948.90px;top:425.00px;width:10.80px;height:1.60px;background:#c4c4cc"></div>
<div class="a" style="left:948.90px;top:430.00px;width:10.80px;height:1.60px;background:#c4c4cc"></div>
<div class="a" style="left:947.50px;top:435.00px;width:14.00px;height:2.00px;background:#f0f0f0"></div>
<div class="a" style="left:948.90px;top:440.00px;width:10.80px;height:1.60px;background:#c4c4cc"></div>
<div class="a" style="left:948.90px;top:445.00px;width:10.80px;height:1.60px;background:#c4c4cc"></div>
<div class="a" style="left:948.90px;top:450.00px;width:10.80px;height:1.60px;background:#c4c4cc"></div>
<div class="a" style="left:948.90px;top:455.00px;width:10.80px;height:1.60px;background:#c4c4cc"></div>
<div class="a" style="left:948.90px;top:460.00px;width:10.80px;height:1.60px;background:#c4c4cc"></div>
<div class="a" style="left:948.90px;top:466.00px;width:10.80px;height:1.60px;background:#c4c4cc"></div>
<div class="a" style="left:948.90px;top:471.00px;width:10.80px;height:1.60px;background:#c4c4cc"></div>
<div class="a" style="left:948.90px;top:476.00px;width:10.80px;height:1.60px;background:#c4c4cc"></div>
<div class="a" style="left:948.90px;top:481.00px;width:10.80px;height:1.60px;background:#c4c4cc"></div>
<div class="a" style="left:948.90px;top:486.00px;width:10.80px;height:1.60px;background:#c4c4cc"></div>
<div class="a" style="left:948.90px;top:491.00px;width:10.80px;height:1.60px;background:#c4c4cc"></div>
<div class="a" style="left:948.90px;top:496.00px;width:10.80px;height:1.60px;background:#c4c4cc"></div>
<div class="a" style="left:947.50px;top:496.80px;width:14.00px;height:1.50px;background:#e0e0e0"></div>
<div class="a t" style="left:754.50px;top:496.55px;width:400px;height:11.90px;line-height:11.90px;font-size:8.5px;color:#f4f4f4;text-align:center;font-weight:bold;transform:scaleX(0.895);transform-origin:50% 50%;">-64</div>
<div class="a" style="left:967.80px;top:417.50px;width:2.20px;height:81.00px;background:#f0f2f4"></div>
<div class="a" style="left:962.90px;top:423.70px;width:11.00px;height:15.30px;background:#f5861c;border-radius:1.5px"></div>
<div class="a" style="left:962.90px;top:426.20px;width:11.00px;height:3.20px;background:linear-gradient(#fcd2a8,#fff2e4,#fcd2a8)"></div>
<div class="a" style="left:962.90px;top:432.60px;width:11.00px;height:3.50px;background:linear-gradient(#fcd2a8,#fff2e4,#fcd2a8)"></div>
<div class="a" style="left:935.70px;top:433.30px;width:10.10px;height:9.60px;background:#3a393f;border:1.2px solid #a4a4ac"></div>
<div class="a t" style="left:740.75px;top:432.35px;width:400px;height:11.90px;line-height:11.90px;font-size:8.5px;color:#f4f4f4;text-align:center;font-weight:bold;transform:scaleX(0.900);transform-origin:50% 50%;">M</div>
<div class="a" style="left:935.70px;top:445.45px;width:10.10px;height:9.60px;background:#3a393f;border:1.2px solid #a4a4ac"></div>
<div class="a t" style="left:740.75px;top:444.50px;width:400px;height:11.90px;line-height:11.90px;font-size:8.5px;color:#f4f4f4;text-align:center;font-weight:bold;transform:scaleX(0.900);transform-origin:50% 50%;">E</div>
<div class="a" style="left:935.70px;top:457.60px;width:10.10px;height:9.60px;background:#3a393f;border:1.2px solid #a4a4ac"></div>
<div class="a t" style="left:740.75px;top:456.65px;width:400px;height:11.90px;line-height:11.90px;font-size:8.5px;color:#f4f4f4;text-align:center;font-weight:bold;transform:scaleX(0.900);transform-origin:50% 50%;">D</div>
<div class="a" style="left:935.70px;top:469.75px;width:10.10px;height:9.60px;background:#3a393f;border:1.2px solid #a4a4ac"></div>
<div class="a t" style="left:740.75px;top:468.80px;width:400px;height:11.90px;line-height:11.90px;font-size:8.5px;color:#f4f4f4;text-align:center;font-weight:bold;transform:scaleX(0.900);transform-origin:50% 50%;">C</div>
<div class="a" style="left:935.70px;top:481.90px;width:10.10px;height:9.60px;background:#3a393f;border:1.2px solid #a4a4ac"></div>
<div class="a t" style="left:740.75px;top:480.95px;width:400px;height:11.90px;line-height:11.90px;font-size:8.5px;color:#f4f4f4;text-align:center;font-weight:bold;transform:scaleX(0.900);transform-origin:50% 50%;">L</div>
<div class="a" style="left:935.70px;top:494.05px;width:10.10px;height:9.60px;background:#3a393f;border:1.2px solid #a4a4ac"></div>
<div class="a t" style="left:740.75px;top:493.10px;width:400px;height:11.90px;line-height:11.90px;font-size:8.5px;color:#f4f4f4;text-align:center;font-weight:bold;transform:scaleX(0.900);transform-origin:50% 50%;">+</div>
<div class="a" style="left:981.70px;top:368.00px;width:41.50px;height:142.00px;background:#38363d;border-radius:6px 6px 0 0"></div>
<div class="a" style="left:982.70px;top:368.00px;width:41.20px;height:14.10px;background:#f7a01a;border-radius:6px 6px 0 0"></div>
<div class="a t" style="left:803.30px;top:369.45px;width:400px;height:14.70px;line-height:14.70px;font-size:10.5px;color:#fff0c8;text-align:center;transform:scaleX(0.752);transform-origin:50% 50%;">OUT 8</div>
<div class="a" style="left:984.60px;top:388.20px;width:37.40px;height:14.60px;background:#040404;border:1.4px solid #cdcdcd"></div>
<div class="a t" style="left:803.30px;top:388.25px;width:400px;height:14.70px;line-height:14.70px;font-size:10.5px;color:#eeeeee;text-align:center;transform:scaleX(0.808);transform-origin:50% 50%;">0.0</div>
<div class="a" style="left:996.30px;top:408.40px;width:14.00px;height:99.60px;border:1.3px solid #cfcfd2;background:#2c2b31"></div>
<div class="a t" style="left:803.30px;top:408.25px;width:400px;height:11.90px;line-height:11.90px;font-size:8.5px;color:#f4f4f4;text-align:center;font-weight:bold;transform:scaleX(1.058);transform-origin:50% 50%;">6</div>
<div class="a" style="left:996.30px;top:418.90px;width:14.00px;height:1.80px;background:#efefef"></div>
<div class="a" style="left:997.70px;top:425.00px;width:10.80px;height:1.60px;background:#c4c4cc"></div>
<div class="a" style="left:997.70px;top:430.00px;width:10.80px;height:1.60px;background:#c4c4cc"></div>
<div class="a" style="left:996.30px;top:435.00px;width:14.00px;height:2.00px;background:#f0f0f0"></div>
<div class="a" style="left:997.70px;top:440.00px;width:10.80px;height:1.60px;background:#c4c4cc"></div>
<div class="a" style="left:997.70px;top:445.00px;width:10.80px;height:1.60px;background:#c4c4cc"></div>
<div class="a" style="left:997.70px;top:450.00px;width:10.80px;height:1.60px;background:#c4c4cc"></div>
<div class="a" style="left:997.70px;top:455.00px;width:10.80px;height:1.60px;background:#c4c4cc"></div>
<div class="a" style="left:997.70px;top:460.00px;width:10.80px;height:1.60px;background:#c4c4cc"></div>
<div class="a" style="left:997.70px;top:466.00px;width:10.80px;height:1.60px;background:#c4c4cc"></div>
<div class="a" style="left:997.70px;top:471.00px;width:10.80px;height:1.60px;background:#c4c4cc"></div>
<div class="a" style="left:997.70px;top:476.00px;width:10.80px;height:1.60px;background:#c4c4cc"></div>
<div class="a" style="left:997.70px;top:481.00px;width:10.80px;height:1.60px;background:#c4c4cc"></div>
<div class="a" style="left:997.70px;top:486.00px;width:10.80px;height:1.60px;background:#c4c4cc"></div>
<div class="a" style="left:997.70px;top:491.00px;width:10.80px;height:1.60px;background:#c4c4cc"></div>
<div class="a" style="left:997.70px;top:496.00px;width:10.80px;height:1.60px;background:#c4c4cc"></div>
<div class="a" style="left:996.30px;top:496.80px;width:14.00px;height:1.50px;background:#e0e0e0"></div>
<div class="a t" style="left:803.30px;top:496.55px;width:400px;height:11.90px;line-height:11.90px;font-size:8.5px;color:#f4f4f4;text-align:center;font-weight:bold;transform:scaleX(0.895);transform-origin:50% 50%;">-64</div>
<div class="a" style="left:1016.60px;top:417.50px;width:2.20px;height:81.00px;background:#f0f2f4"></div>
<div class="a" style="left:1011.70px;top:423.70px;width:11.00px;height:15.30px;background:#f5861c;border-radius:1.5px"></div>
<div class="a" style="left:1011.70px;top:426.20px;width:11.00px;height:3.20px;background:linear-gradient(#fcd2a8,#fff2e4,#fcd2a8)"></div>
<div class="a" style="left:1011.70px;top:432.60px;width:11.00px;height:3.50px;background:linear-gradient(#fcd2a8,#fff2e4,#fcd2a8)"></div>
<div class="a" style="left:984.50px;top:433.30px;width:10.10px;height:9.60px;background:#3a393f;border:1.2px solid #a4a4ac"></div>
<div class="a t" style="left:789.55px;top:432.35px;width:400px;height:11.90px;line-height:11.90px;font-size:8.5px;color:#f4f4f4;text-align:center;font-weight:bold;transform:scaleX(0.900);transform-origin:50% 50%;">M</div>
<div class="a" style="left:984.50px;top:445.45px;width:10.10px;height:9.60px;background:#3a393f;border:1.2px solid #a4a4ac"></div>
<div class="a t" style="left:789.55px;top:444.50px;width:400px;height:11.90px;line-height:11.90px;font-size:8.5px;color:#f4f4f4;text-align:center;font-weight:bold;transform:scaleX(0.900);transform-origin:50% 50%;">E</div>
<div class="a" style="left:984.50px;top:457.60px;width:10.10px;height:9.60px;background:#3a393f;border:1.2px solid #a4a4ac"></div>
<div class="a t" style="left:789.55px;top:456.65px;width:400px;height:11.90px;line-height:11.90px;font-size:8.5px;color:#f4f4f4;text-align:center;font-weight:bold;transform:scaleX(0.900);transform-origin:50% 50%;">D</div>
<div class="a" style="left:984.50px;top:469.75px;width:10.10px;height:9.60px;background:#3a393f;border:1.2px solid #a4a4ac"></div>
<div class="a t" style="left:789.55px;top:468.80px;width:400px;height:11.90px;line-height:11.90px;font-size:8.5px;color:#f4f4f4;text-align:center;font-weight:bold;transform:scaleX(0.900);transform-origin:50% 50%;">C</div>
<div class="a" style="left:984.50px;top:481.90px;width:10.10px;height:9.60px;background:#3a393f;border:1.2px solid #a4a4ac"></div>
<div class="a t" style="left:789.55px;top:480.95px;width:400px;height:11.90px;line-height:11.90px;font-size:8.5px;color:#f4f4f4;text-align:center;font-weight:bold;transform:scaleX(0.900);transform-origin:50% 50%;">L</div>
<div class="a" style="left:984.50px;top:494.05px;width:10.10px;height:9.60px;background:#3a393f;border:1.2px solid #a4a4ac"></div>
<div class="a t" style="left:789.55px;top:493.10px;width:400px;height:11.90px;line-height:11.90px;font-size:8.5px;color:#f4f4f4;text-align:center;font-weight:bold;transform:scaleX(0.900);transform-origin:50% 50%;">+</div>
</body></html>
